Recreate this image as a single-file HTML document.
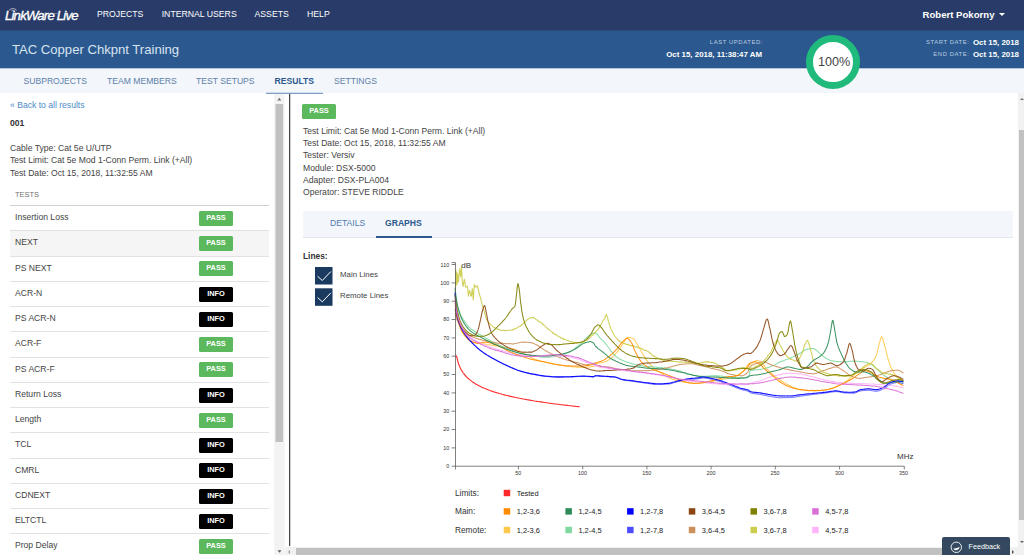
<!DOCTYPE html>
<html lang="en">
<head>
<meta charset="utf-8">
<title>LinkWare Live - TAC Copper Chkpnt Training</title>
<style>
*{box-sizing:border-box;margin:0;padding:0}
html,body{width:1024px;height:555px;overflow:hidden;background:#fff}
body{font-family:"Liberation Sans",Arial,sans-serif;font-size:8.6px;color:#444;position:relative}
.abs{position:absolute;white-space:nowrap}
/* top nav */
#nav{position:absolute;left:0;top:0;width:1024px;height:31px;background:#293c69}
#logo{left:5px;top:6.5px;font-size:13.2px;font-style:italic;color:#fff;letter-spacing:-0.82px;line-height:18px;font-weight:400;-webkit-text-stroke:0.35px #fff}
.navi{top:0;height:30px;line-height:29px;color:#fff;font-size:8.7px}
#user{top:0;height:30px;line-height:29px;color:#fff;font-weight:700;font-size:9.6px}
/* band */
#band{position:absolute;left:0;top:30px;width:1024px;height:39px;background:#2b598f}
#title{left:12px;top:11.3px;font-size:13.1px;color:#d9e3ef;line-height:18px}
.bl{color:#b9cbe0;font-size:5.9px;letter-spacing:0.58px}
.bv{color:#fff;font-size:7.9px;font-weight:700}
/* tabs */
#tabs{position:absolute;left:0;top:68px;width:1024px;height:25px;background:#f3f6fa}
.tab{top:0.5px;height:25px;line-height:25px;color:#5c80ab;font-size:8.6px}
.tab.act{color:#2b598f;font-weight:700}
/* left */
#left{position:absolute;left:0;top:93px;width:274px;height:462px;background:#fff;overflow:hidden}
.row{position:absolute;left:10px;width:259px;height:25.25px;border-top:1px solid #e2e2e2}
.row span{position:absolute;left:5px;top:0;line-height:23px;color:#444}
.row i{position:absolute;left:189px;top:4.8px;width:34px;height:15px;border-radius:1.5px;font-style:normal;font-weight:700;font-size:7.4px;line-height:13.6px;text-align:center;color:#fff}
.pass{background:#5cb85c}
.info{background:#000}
.sb{position:absolute;background:#f1f1f1}
.th{position:absolute;background:#c1c1c1}
</style>
</head>
<body>
<div id="nav">
  <div class="abs" id="logo">LinkWare<span style="font-size:2.4px;font-style:normal;letter-spacing:0;-webkit-text-stroke:0;position:relative;top:-6px;left:0.2px;margin-right:-1.2px;opacity:.8">TM</span><span style="margin-left:0.6px">Live</span></div>
  <svg class="abs" style="left:8px;top:5.6px" width="10" height="5" viewBox="0 0 10 5"><path d="M1.2 4.2A5 5 0 0 1 8.6 4.2M2.8 5.4A3 3 0 0 1 7 5.4" fill="none" stroke="#fff" stroke-width="0.7" stroke-opacity="0.85"/></svg>
  <div class="abs navi" style="left:97px">PROJECTS</div>
  <div class="abs navi" style="left:161.7px">INTERNAL USERS</div>
  <div class="abs navi" style="left:254.5px">ASSETS</div>
  <div class="abs navi" style="left:307px">HELP</div>
  <div class="abs" id="user" style="left:922.5px">Robert Pokorny</div>
  <div class="abs" style="left:999px;top:13px;width:0;height:0;border-left:3px solid transparent;border-right:3px solid transparent;border-top:3px solid #fff"></div>
</div>
<div id="band">
  <div class="abs" id="title">TAC Copper Chkpnt Training</div>
  <div class="abs bl" style="right:261px;top:9.4px">LAST UPDATED:</div>
  <div class="abs bv" style="right:262px;top:20px">Oct 15, 2018, 11:38:47 AM</div>
  <div class="abs bl" style="right:54.5px;top:9.2px">START DATE:</div>
  <div class="abs bv" style="right:5px;top:8px">Oct 15, 2018</div>
  <div class="abs bl" style="right:54.5px;top:21.2px">END DATE:</div>
  <div class="abs bv" style="right:5px;top:20px">Oct 15, 2018</div>
</div>
<div id="tabs">
  <div class="abs tab" style="left:23.5px">SUBPROJECTS</div>
  <div class="abs tab" style="left:107px">TEAM MEMBERS</div>
  <div class="abs tab" style="left:196px">TEST SETUPS</div>
  <div class="abs tab act" style="left:274.6px">RESULTS</div>
  <div class="abs tab" style="left:334px">SETTINGS</div>
</div>
<div class="abs" style="left:0;top:30px;width:1024px;height:1px;background:#2a4878"></div>
<div class="abs" style="left:0;top:68px;width:1024px;height:1px;background:#b7c7da"></div>
<!-- progress ring -->
<svg class="abs" style="left:803px;top:31.8px" width="60" height="60" viewBox="0 0 60 60">
  <circle cx="30" cy="30" r="23.5" fill="#fff" stroke="#21ba7d" stroke-width="7"/>
  <text x="31.2" y="34" text-anchor="middle" font-family="Liberation Sans, Arial, sans-serif" font-size="12.6" fill="#444">100%</text>
</svg>

<div id="left">
  <div class="abs" style="left:10px;top:6px;color:#4a8bc9;line-height:12px">« Back to all results</div>
  <div class="abs" style="left:10px;top:24px;color:#333;font-weight:700;line-height:12px">001</div>
  <div class="abs" style="left:10px;top:48.7px;line-height:12.44px;color:#444">Cable Type: Cat 5e U/UTP<br>Test Limit: Cat 5e Mod 1-Conn Perm. Link (+All)<br>Test Date: Oct 15, 2018, 11:32:55 AM</div>
  <div class="abs" style="left:15px;top:96.6px;font-size:7.45px;color:#707070;line-height:10px">TESTS</div>
  <div class="row" style="top:112px;border-top:1px solid #d0d0d0"><span>Insertion Loss</span><i class="pass">PASS</i></div>
  <div class="row" style="top:137.25px;background:#f5f5f5"><span>NEXT</span><i class="pass">PASS</i></div>
  <div class="row" style="top:162.5px"><span>PS NEXT</span><i class="pass">PASS</i></div>
  <div class="row" style="top:187.75px"><span>ACR-N</span><i class="info">INFO</i></div>
  <div class="row" style="top:213px"><span>PS ACR-N</span><i class="info">INFO</i></div>
  <div class="row" style="top:238.25px"><span>ACR-F</span><i class="pass">PASS</i></div>
  <div class="row" style="top:263.5px"><span>PS ACR-F</span><i class="pass">PASS</i></div>
  <div class="row" style="top:288.75px"><span>Return Loss</span><i class="info">INFO</i></div>
  <div class="row" style="top:314px"><span>Length</span><i class="pass">PASS</i></div>
  <div class="row" style="top:339.25px"><span>TCL</span><i class="info">INFO</i></div>
  <div class="row" style="top:364.5px"><span>CMRL</span><i class="info">INFO</i></div>
  <div class="row" style="top:389.75px"><span>CDNEXT</span><i class="info">INFO</i></div>
  <div class="row" style="top:415px"><span>ELTCTL</span><i class="info">INFO</i></div>
  <div class="row" style="top:440.25px"><span>Prop Delay</span><i class="pass">PASS</i></div>
</div>
<!-- left scrollbar -->
<svg class="abs" style="left:270px;top:93px" width="20" height="462" viewBox="270 93 20 462">
  <rect x="274.2" y="93" width="10.4" height="462" fill="#f3f3f3"/>
  <rect x="275.5" y="104" width="7.6" height="338" fill="#c1c1c1"/>
  <path d="M277.3 100.4L279.3 97.8L281.3 100.4Z" fill="#707070"/>
  <path d="M277.5 550.2L279.5 552.8L281.5 550.2Z" fill="#606060"/>
</svg>
<!-- divider -->
<div class="abs" style="left:289px;top:93px;width:1px;height:453px;background:#444"></div><div class="abs" style="left:290px;top:94px;width:1px;height:452px;background:#d0d0d0"></div>

<div class="abs" style="left:266px;top:92px;width:57px;height:1px;background:#d3deeb"></div><div class="abs" style="left:266px;top:93px;width:57px;height:1px;background:#7f9fc6"></div>
<!-- RIGHT -->
<div class="abs pass" style="left:302px;top:104px;width:34px;height:15px;border-radius:1.5px;color:#fff;font-weight:700;font-size:7.4px;line-height:13.6px;text-align:center">PASS</div>
<div class="abs" style="left:303px;top:124.5px;line-height:12.35px;color:#444">Test Limit: Cat 5e Mod 1-Conn Perm. Link (+All)<br>Test Date: Oct 15, 2018, 11:32:55 AM<br>Tester: Versiv<br>Module: DSX-5000<br>Adapter: DSX-PLA004<br>Operator: STEVE RIDDLE</div>
<div class="abs" style="left:302.5px;top:211px;width:710.5px;height:26.5px;background:#f3f6fa;border-bottom:1.5px solid #e3e8ee"></div>
<div class="abs" style="left:330px;top:211px;line-height:25px;color:#4f7cb0">DETAILS</div>
<div class="abs" style="left:385px;top:211px;line-height:25px;color:#2b598f;font-weight:700">GRAPHS</div>
<div class="abs" style="left:376px;top:235.5px;width:56px;height:2px;background:#2b598f"></div>

<div class="abs" style="left:303px;top:250px;line-height:12px;color:#333;font-weight:700;font-size:8.4px">Lines:</div>
<svg class="abs" style="left:315px;top:267px" width="18" height="39" viewBox="0 0 18 39">
  <rect x="0" y="0" width="17.5" height="17.5" fill="#1b3a5f"/>
  <polyline points="2.6,9.3 7.3,13.5 15.8,4.6" fill="none" stroke="#fff" stroke-width="1"/>
  <rect x="0" y="21.3" width="17.5" height="17.5" fill="#1b3a5f"/>
  <polyline points="2.6,30.6 7.3,34.8 15.8,25.9" fill="none" stroke="#fff" stroke-width="1"/>
</svg>
<div class="abs" style="left:340px;top:268.7px;line-height:12px;font-size:7.85px;color:#444">Main Lines</div>
<div class="abs" style="left:340px;top:290.4px;line-height:12px;font-size:7.85px;color:#444">Remote Lines</div>

<!-- CHART -->
<svg id="chart" class="abs" style="left:430px;top:255px" width="500" height="290" viewBox="430 255 500 290" font-family="Liberation Sans, Arial, sans-serif">
<polyline fill="none" stroke="#ff2a2a" stroke-width="1.15" points="455.5,356.0 455.8,356.0 456.1,356.0 456.4,356.0 456.8,356.9 457.1,358.3 457.4,359.6 457.7,360.8 458.0,361.9 458.3,362.9 458.6,363.9 458.9,364.7 459.3,365.5 459.6,366.3 459.9,367.0 460.2,367.7 460.5,368.3 460.8,369.0 461.1,369.5 461.5,370.1 461.8,370.6 462.1,371.2 462.4,371.7 462.7,372.1 463.0,372.6 463.3,373.0 463.7,373.5 464.0,373.9 464.3,374.3 464.6,374.7 464.9,375.0 465.2,375.4 465.5,375.8 465.9,376.1 466.2,376.5 466.5,376.8 466.8,377.1 468.0,378.3 469.3,379.4 470.6,380.4 471.8,381.4 473.1,382.3 474.3,383.1 475.6,383.9 476.8,384.6 478.1,385.3 479.3,385.9 480.6,386.6 481.8,387.2 483.1,387.7 484.4,388.3 485.6,388.8 486.9,389.3 488.1,389.8 489.4,390.3 490.6,390.7 491.9,391.1 493.1,391.6 494.4,392.0 495.6,392.4 496.9,392.8 498.2,393.1 499.4,393.5 500.7,393.8 501.9,394.2 503.2,394.5 504.4,394.9 505.7,395.2 506.9,395.5 508.2,395.8 509.4,396.1 510.7,396.4 512.0,396.7 513.2,396.9 514.5,397.2 515.7,397.5 517.0,397.7 518.2,398.0 519.5,398.3 520.7,398.5 522.0,398.7 523.2,399.0 524.5,399.2 525.8,399.4 527.0,399.7 528.3,399.9 529.5,400.1 530.8,400.3 532.0,400.5 533.3,400.7 534.5,401.0 535.8,401.2 537.0,401.4 538.3,401.5 539.6,401.7 540.8,401.9 542.1,402.1 543.3,402.3 544.6,402.5 545.8,402.7 547.1,402.8 548.3,403.0 549.6,403.2 550.8,403.4 552.1,403.5 553.4,403.7 554.6,403.9 555.9,404.0 557.1,404.2 558.4,404.3 559.6,404.5 560.9,404.7 562.1,404.8 563.4,405.0 564.6,405.1 565.9,405.3 567.2,405.4 568.4,405.5 569.7,405.7 570.9,405.8 572.2,406.0 573.4,406.1 574.7,406.2 575.9,406.4 577.2,406.5 578.4,406.6 579.7,406.8"/>
<polyline fill="none" stroke="#ffc84d" stroke-width="1.05" stroke-linejoin="round" stroke-opacity="0.92" points="455.1,305.5 455.8,310.2 456.6,314.3 457.1,316.7 457.3,317.9 458.1,321.2 458.8,324.1 459.6,326.8 460.1,328.2 460.3,328.7 461.1,330.2 461.8,331.7 462.6,332.9 463.3,334.0 464.1,335.0 464.8,335.9 465.2,336.3 465.6,336.7 466.3,337.4 467.1,338.2 467.8,338.9 468.6,339.6 469.3,340.3 470.1,340.8 470.8,341.0 471.6,341.5 472.3,341.9 472.8,342.0 473.1,342.2 473.8,342.3 474.6,342.6 475.3,342.5 476.1,342.7 476.8,343.0 477.6,343.0 478.3,343.1 479.1,343.1 479.8,343.1 480.3,343.3 480.6,343.4 481.3,343.4 482.1,343.6 482.8,343.7 483.6,343.8 484.3,344.0 485.1,344.1 485.8,344.2 486.6,344.3 487.3,344.5 488.1,344.7 488.8,344.8 489.6,344.8 490.3,345.0 491.1,345.1 491.8,345.3 492.6,345.3 493.3,345.6 494.1,345.6 494.8,345.6 495.5,345.8 495.6,345.9 496.3,346.0 497.1,346.1 497.8,346.2 498.6,346.4 499.3,346.5 500.1,346.6 500.8,346.8 501.6,346.7 502.3,347.0 503.1,347.2 503.8,347.2 504.6,347.3 505.3,347.5 506.1,347.6 506.8,347.8 507.6,347.8 508.3,347.9 509.1,348.1 509.8,348.2 510.6,348.5 511.3,348.6 512.1,348.6 512.8,348.8 513.6,349.2 514.3,349.3 515.1,349.4 515.7,349.6 515.8,349.7 516.6,350.0 517.3,350.3 518.1,350.5 518.8,350.8 519.6,351.1 520.3,351.6 521.1,351.8 521.8,352.3 522.6,352.8 523.3,353.1 524.1,353.6 524.8,354.0 525.6,354.6 526.3,354.9 527.1,355.4 527.8,355.9 528.6,356.3 529.3,356.6 530.1,356.9 530.8,357.5 531.6,357.8 532.3,358.0 533.1,358.4 533.3,358.5 533.8,358.7 534.6,358.9 535.3,359.2 536.1,359.4 536.8,359.7 537.6,359.9 538.3,360.2 539.1,360.5 539.8,360.5 540.6,360.7 541.3,361.1 542.1,361.5 542.8,361.5 543.6,361.6 544.3,362.0 545.1,362.1 545.8,362.3 546.6,362.5 547.3,362.7 548.1,362.8 548.8,363.1 549.6,363.2 550.3,363.3 551.0,363.5 551.1,363.5 551.8,363.7 552.6,363.8 553.3,363.9 554.1,364.3 554.8,364.3 555.6,364.4 556.3,364.6 557.1,364.7 557.8,364.8 558.6,365.0 559.3,365.1 560.1,365.1 560.8,365.4 561.6,365.4 562.3,365.5 563.1,365.6 563.8,365.7 564.6,366.0 565.3,365.9 566.1,366.0 566.1,365.9 566.8,366.1 567.6,366.3 568.3,366.3 569.1,366.3 569.8,366.5 570.6,366.6 571.3,366.7 572.1,366.9 572.8,366.8 573.6,366.8 574.3,366.9 575.1,367.0 575.8,367.1 576.6,367.1 577.3,367.2 578.1,367.1 578.8,367.3 579.6,367.2 580.3,367.2 581.1,367.4 581.3,367.4 581.8,367.3 582.6,367.3 583.3,367.2 584.1,367.5 584.8,367.3 585.6,367.1 586.3,367.1 587.1,367.2 587.8,367.0 588.6,367.1 589.3,366.9 590.1,367.0 590.8,366.9 591.6,366.5 592.3,366.6 593.1,366.3 593.8,366.4 593.9,366.3 594.6,365.1 595.0,364.3 595.3,364.4 596.1,364.0 596.8,363.5 597.6,363.4 598.3,363.2 599.1,363.1 599.8,362.9 600.6,363.0 601.3,362.7 602.1,362.6 602.8,362.5 603.6,362.3 604.3,362.1 605.1,361.8 605.8,361.6 606.6,361.1 607.3,360.8 608.1,360.3 608.8,359.8 609.6,359.3 610.3,358.7 611.1,358.1 611.8,357.4 612.6,356.7 613.3,356.0 614.1,355.3 614.8,354.5 615.2,354.3 615.6,353.8 616.3,353.0 617.1,352.2 617.8,351.2 618.6,350.1 619.3,348.9 620.1,348.0 620.8,346.9 621.6,345.7 622.3,344.8 622.8,344.2 623.1,343.6 623.8,342.5 624.6,341.2 625.3,339.9 626.1,338.6 626.8,338.0 627.6,337.4 627.8,337.3 628.3,337.5 629.1,337.4 629.8,337.6 630.6,337.7 631.3,337.9 632.1,338.2 632.8,338.3 632.9,338.5 633.6,338.8 634.3,339.6 635.1,340.7 635.8,342.0 636.6,343.3 637.3,344.5 637.9,345.5 638.1,345.6 638.8,346.9 639.6,348.3 640.3,349.6 641.1,351.1 641.8,352.4 642.6,353.8 642.9,354.2 643.3,354.9 644.1,356.2 644.8,357.2 645.6,358.8 646.3,359.6 647.1,360.7 647.8,361.8 648.0,361.9 648.6,362.5 649.3,363.5 650.1,364.3 650.8,365.0 651.6,365.7 652.3,366.5 653.1,367.1 653.8,367.8 654.3,368.2 654.6,368.4 655.3,368.9 656.1,369.6 656.8,370.2 657.6,370.9 658.3,371.4 659.1,371.9 659.8,372.4 660.6,372.9 661.3,373.3 662.1,373.9 662.8,374.5 663.1,374.5 663.6,374.7 664.3,375.2 665.1,375.6 665.8,376.0 666.6,376.5 667.3,376.9 668.1,377.4 668.8,377.7 669.6,378.1 670.3,378.5 671.1,378.7 671.8,379.1 672.6,379.3 673.2,379.5 673.3,379.6 674.1,379.8 674.8,380.0 675.6,380.3 676.3,380.4 677.1,380.8 677.8,380.9 678.6,381.1 679.3,381.2 680.1,381.4 680.8,381.6 681.6,381.7 682.3,381.8 683.1,382.0 683.3,382.0 683.8,382.2 684.6,382.3 685.3,382.4 686.1,382.5 686.8,382.5 687.6,382.7 688.3,382.8 689.1,382.9 689.8,383.1 690.6,382.9 691.3,383.1 692.1,383.1 692.8,383.3 693.6,383.2 694.3,383.3 695.1,383.3 695.8,383.4 695.9,383.3 696.6,383.3 697.3,383.3 698.1,383.3 698.8,383.2 699.6,383.0 700.3,383.2 701.1,383.1 701.8,383.0 702.6,382.8 703.3,382.8 704.1,382.6 704.8,382.6 705.6,382.4 706.3,382.4 707.1,382.3 707.8,382.1 708.6,382.1 708.6,382.1 709.3,382.0 710.1,381.9 710.8,381.6 711.6,381.6 712.3,381.5 713.1,381.4 713.8,381.0 714.6,380.9 715.3,380.9 716.1,380.5 716.8,380.4 717.6,380.3 718.3,380.2 719.1,379.9 719.8,379.9 720.6,379.7 721.2,379.7 721.3,379.5 722.1,379.4 722.8,379.2 723.6,379.1 724.3,379.0 725.1,378.9 725.8,378.8 726.6,378.5 727.3,378.5 728.1,378.4 728.8,378.2 729.6,378.0 730.3,377.9 731.1,377.6 731.8,377.6 732.6,377.4 733.3,377.1 733.8,377.1 734.1,376.8 734.8,376.6 735.6,376.3 736.3,376.1 737.1,375.5 737.8,375.2 738.6,374.8 739.3,374.3 740.1,373.8 740.8,373.1 741.6,372.4 742.3,372.1 743.1,371.3 743.8,370.7 743.9,370.6 744.6,370.0 745.3,368.9 746.1,367.5 746.8,366.4 747.6,365.1 748.3,364.2 749.1,363.7 749.4,363.6 749.8,364.3 750.0,364.4 750.6,364.3 751.3,364.0 752.1,363.4 752.8,362.8 753.6,362.1 754.3,361.6 755.1,360.9 755.8,360.8 756.3,360.6 756.6,360.6 757.3,360.6 758.1,360.8 758.8,360.9 759.6,360.9 760.1,361.0 760.3,361.2 761.1,361.6 761.8,362.6 762.6,363.6 763.3,364.6 764.1,365.6 764.8,366.6 765.1,366.9 765.6,367.5 766.3,368.4 767.1,369.1 767.8,369.7 768.6,370.5 769.3,371.2 770.1,371.9 770.8,372.7 771.5,373.2 771.6,373.5 772.3,374.0 773.1,374.8 773.8,375.4 774.6,375.9 775.3,376.6 776.1,377.1 776.8,377.6 777.6,378.2 777.8,378.3 778.3,378.7 779.1,379.2 779.8,379.7 780.6,380.3 781.3,380.7 782.1,381.2 782.8,381.6 783.6,382.2 784.3,382.7 785.1,383.1 785.8,383.6 786.6,384.0 787.3,384.3 787.9,384.6 788.1,384.7 788.8,385.2 789.6,385.5 790.3,386.0 791.1,386.2 791.8,386.6 792.6,387.0 793.3,387.3 794.1,387.5 794.8,387.8 795.6,388.2 796.3,388.6 797.1,388.8 797.8,389.0 798.6,389.2 799.3,389.5 800.1,389.4 800.5,389.7 800.8,389.7 801.6,389.7 802.3,390.1 803.1,389.9 803.8,390.1 804.6,390.2 805.3,390.4 806.1,390.4 806.8,390.6 807.6,390.6 808.3,390.7 809.1,390.6 809.8,390.7 810.6,391.0 811.3,390.8 812.1,390.8 812.8,390.9 813.1,391.0 813.6,390.9 814.3,390.9 815.1,390.8 815.8,390.9 816.6,390.8 817.3,390.6 818.1,390.8 818.8,390.7 819.6,390.4 820.3,390.4 821.1,390.4 821.8,390.1 822.6,389.9 823.3,389.9 824.1,389.8 824.8,389.7 825.6,389.7 825.7,389.7 826.3,389.4 827.1,389.4 827.8,389.4 828.6,389.2 829.3,389.0 830.1,388.7 830.8,388.6 831.6,388.2 832.3,388.1 833.1,387.8 833.8,387.6 834.6,387.3 835.3,386.9 836.1,386.7 836.8,386.5 837.6,386.1 838.3,385.8 838.3,385.8 839.1,385.4 839.8,385.2 840.6,384.9 841.3,384.4 842.1,383.9 842.8,383.4 843.6,383.0 844.3,382.4 845.1,382.0 845.8,381.5 846.6,380.9 847.3,380.3 848.1,379.8 848.4,379.5 848.8,379.4 849.6,378.7 850.3,377.9 851.1,377.4 851.8,376.9 852.6,376.1 853.3,375.5 854.1,374.8 854.8,374.0 855.6,373.4 856.0,373.1 856.3,373.0 857.1,372.5 857.8,372.0 858.6,371.4 859.3,371.0 860.1,370.4 860.8,369.9 861.6,369.5 862.3,368.9 863.1,368.3 863.6,368.1 863.8,368.0 864.6,367.3 865.3,367.1 866.1,366.6 866.8,366.1 867.6,365.7 868.3,365.3 869.1,364.8 869.8,364.3 870.6,363.7 871.1,363.0 871.3,362.9 872.1,362.2 872.8,361.4 873.6,360.3 874.3,359.1 875.1,357.9 875.8,356.3 876.2,355.5 876.6,354.4 877.3,351.7 878.1,348.8 878.8,345.4 879.2,344.2 879.6,342.7 880.3,339.9 881.1,337.5 881.7,336.6 881.8,336.7 882.6,338.1 883.3,340.7 884.1,343.8 884.3,344.3 884.8,346.3 885.6,349.2 886.3,352.3 887.1,355.3 887.5,356.8 887.8,358.1 888.6,360.5 889.3,362.9 890.1,365.1 890.8,367.2 891.3,368.0 891.6,368.7 892.3,370.2 893.1,371.4 893.8,372.6 894.6,373.7 895.3,374.7 896.1,375.5 896.4,375.8 896.8,376.3 897.6,376.9 898.3,377.7 899.1,378.2 899.8,378.8 900.6,379.3 901.3,379.8 902.1,380.3 902.8,380.7 903.4,380.8"/>
<polyline fill="none" stroke="#7fd8a0" stroke-width="1.05" stroke-linejoin="round" stroke-opacity="0.92" points="455.1,290.3 455.8,296.6 456.6,301.6 456.6,301.5 457.3,305.3 458.1,308.2 458.8,310.4 458.9,310.6 459.6,312.4 460.3,314.1 461.1,315.8 461.8,317.1 462.6,318.4 463.2,319.3 463.3,319.7 464.1,320.8 464.8,321.9 465.6,322.9 466.3,324.0 467.1,324.8 467.8,325.8 468.6,326.6 469.3,327.4 470.1,328.1 470.2,328.1 470.8,328.8 471.6,329.5 472.3,329.8 473.1,330.3 473.8,330.8 474.6,331.5 475.3,331.9 476.1,332.5 476.8,332.9 477.6,333.3 478.3,333.7 479.1,334.1 479.8,334.6 480.6,334.9 481.3,335.4 482.1,335.8 482.8,336.4 482.9,336.2 483.6,336.6 484.3,337.1 485.1,337.7 485.8,338.0 486.6,338.6 487.3,338.8 488.1,339.4 488.8,339.9 489.6,340.1 490.3,340.6 491.1,341.1 491.8,341.5 492.6,341.9 493.3,342.4 494.1,342.7 494.8,343.0 495.5,343.3 495.6,343.4 496.3,343.7 497.1,344.1 497.8,344.5 498.6,344.9 499.3,345.1 500.1,345.4 500.8,345.7 501.6,346.3 502.3,346.5 503.1,346.9 503.8,347.1 504.6,347.4 505.3,347.8 506.1,348.1 506.8,348.3 507.6,348.6 508.1,349.0 508.3,349.0 509.1,349.3 509.8,349.6 510.6,349.8 511.3,350.2 512.1,350.5 512.8,350.7 513.6,351.1 514.3,351.3 515.1,351.6 515.8,352.0 516.6,352.1 517.3,352.5 518.1,352.6 518.8,352.9 519.6,353.1 520.3,353.3 520.7,353.4 521.1,353.5 521.8,353.7 522.6,353.8 523.3,354.0 524.1,354.1 524.8,354.4 525.6,354.6 526.3,354.8 527.1,354.9 527.8,355.2 528.6,355.2 529.3,355.3 530.1,355.6 530.8,355.5 531.6,355.8 532.3,355.7 533.1,355.9 533.3,355.8 533.8,356.1 534.6,356.1 535.3,356.1 536.1,356.5 536.8,356.5 537.6,356.5 538.3,356.6 539.1,356.7 539.8,356.8 540.6,356.9 541.3,357.0 542.1,357.0 542.8,357.1 543.6,357.1 544.3,357.1 545.1,357.2 545.8,357.2 545.9,357.3 546.6,357.3 547.3,357.1 548.1,357.2 548.8,357.1 549.6,357.2 550.3,357.0 551.1,357.0 551.8,356.8 552.6,356.7 553.3,356.7 554.1,356.6 554.8,356.5 555.6,356.3 556.3,356.3 557.1,356.1 557.8,356.2 558.6,355.9 558.6,356.0 559.3,355.7 560.1,355.7 560.8,355.4 561.6,355.2 562.3,355.0 563.1,354.7 563.8,354.4 564.6,354.2 565.3,353.8 566.1,353.5 566.8,353.0 567.6,352.7 568.3,352.4 569.1,351.8 569.8,351.7 570.6,351.2 571.2,350.9 571.3,350.9 572.1,350.4 572.8,350.0 573.6,349.4 574.3,349.0 575.1,348.4 575.8,347.8 576.6,347.3 577.3,346.7 578.1,345.9 578.8,345.4 579.6,344.7 580.3,344.2 581.1,343.5 581.3,343.2 581.8,342.7 582.6,342.1 583.3,341.3 584.1,340.6 584.8,339.7 585.6,338.8 586.3,338.0 587.1,337.1 587.8,336.6 588.6,336.0 588.8,335.7 589.3,335.4 590.1,335.0 590.8,334.6 591.6,334.0 592.3,333.6 593.1,333.4 593.4,333.1 593.8,333.1 594.6,332.8 595.0,332.9 595.3,332.8 596.1,333.4 596.8,334.0 597.6,334.7 598.3,335.7 599.1,336.8 599.8,337.8 600.0,337.9 600.6,338.4 601.3,339.1 602.1,339.9 602.8,340.6 603.6,341.4 604.3,342.1 605.1,343.0 605.8,343.9 606.6,344.7 607.3,346.0 608.1,347.0 608.8,348.0 609.6,349.0 610.3,350.2 611.1,351.2 611.8,352.1 612.6,352.8 612.7,353.1 613.3,353.7 614.1,354.4 614.8,355.4 615.6,356.1 616.3,356.7 617.1,357.2 617.8,357.9 618.6,358.2 619.3,358.8 620.1,359.2 620.2,359.3 620.8,359.5 621.6,360.1 622.3,360.4 623.1,360.7 623.8,361.1 624.6,361.2 625.3,361.5 626.1,361.7 626.8,362.0 627.6,362.4 628.3,362.5 629.1,362.8 629.8,362.9 630.3,363.1 630.6,363.2 631.3,363.3 632.1,363.8 632.8,364.0 633.6,364.0 634.3,364.3 635.1,364.5 635.8,364.6 636.6,364.9 637.3,365.0 638.1,365.2 638.8,365.3 639.6,365.5 640.3,365.6 640.4,365.5 641.1,365.7 641.8,365.8 642.6,365.9 643.3,366.0 644.1,366.2 644.8,366.2 645.6,366.2 646.3,366.4 647.1,366.3 647.8,366.6 648.6,366.6 649.3,366.5 650.1,366.7 650.8,366.8 651.6,366.6 652.3,366.8 653.0,366.9 653.1,366.8 653.8,366.9 654.6,367.0 655.3,367.2 656.1,367.2 656.8,367.5 657.6,367.3 658.3,367.5 659.1,367.5 659.8,367.6 660.6,367.5 661.3,367.5 662.1,367.7 662.8,367.9 663.6,368.0 664.3,368.1 665.1,368.1 665.7,368.1 665.8,368.3 666.6,368.4 667.3,368.4 668.1,368.5 668.8,368.6 669.6,368.9 670.3,369.0 671.1,369.1 671.8,369.3 672.6,369.4 673.3,369.5 674.1,369.6 674.8,369.8 675.6,369.9 676.3,370.3 677.1,370.6 677.8,370.5 678.3,370.7 678.6,370.8 679.3,370.9 680.1,371.2 680.8,371.3 681.6,371.8 682.3,371.9 683.1,372.2 683.8,372.5 684.6,372.6 685.3,372.8 686.1,373.1 686.8,373.5 687.6,373.7 688.3,373.9 689.1,374.0 689.8,374.3 690.6,374.5 690.9,374.5 691.3,374.7 692.1,374.7 692.8,374.8 693.6,374.9 694.3,375.3 695.1,375.3 695.8,375.5 696.6,375.6 697.3,375.8 698.1,375.9 698.8,375.9 699.6,376.0 700.3,376.2 701.1,376.1 701.8,376.3 702.6,376.3 703.3,376.3 703.5,376.2 704.1,376.3 704.8,376.2 705.6,376.2 706.3,376.2 707.1,376.2 707.8,376.1 708.6,376.1 709.3,376.1 710.1,375.9 710.8,376.0 711.6,375.8 712.3,375.7 713.1,375.8 713.8,375.8 714.6,375.8 715.3,375.6 716.1,375.8 716.1,375.8 716.8,375.9 717.6,375.8 718.3,375.9 719.1,375.8 719.8,375.9 720.6,376.0 721.3,376.2 722.1,376.1 722.8,376.3 723.6,376.5 724.3,376.7 725.1,376.7 725.8,376.7 726.6,376.8 727.3,377.0 728.1,377.0 728.8,377.1 728.8,377.1 729.6,377.0 730.3,377.1 731.1,377.1 731.8,377.2 732.6,377.4 733.3,377.4 734.1,377.4 734.8,377.6 735.6,377.6 736.3,377.5 737.1,377.7 737.8,377.7 738.6,377.7 739.3,377.6 740.1,377.8 740.8,377.8 741.4,377.6 741.6,377.8 742.3,377.8 743.1,377.7 743.8,377.7 744.6,377.6 745.3,377.4 746.1,377.3 746.8,377.2 747.6,376.7 748.3,376.6 748.9,376.3 749.1,375.8 749.8,371.0 750.0,370.6 750.6,370.5 751.3,370.3 752.1,370.2 752.8,370.0 753.6,370.2 754.3,369.9 755.1,369.9 755.8,369.8 756.6,369.8 757.3,369.8 758.1,369.7 758.8,369.7 759.6,369.6 760.1,369.4 760.3,369.5 761.1,369.2 761.8,369.3 762.6,369.0 763.3,368.7 764.1,368.5 764.8,368.4 765.6,368.2 766.3,368.0 767.1,367.8 767.8,367.6 768.6,367.4 769.3,367.3 770.1,366.8 770.2,366.9 770.8,366.6 771.6,366.3 772.3,365.9 773.1,365.6 773.8,365.3 774.6,364.9 775.3,364.4 776.1,364.1 776.8,363.6 777.6,363.2 778.3,362.8 779.1,362.4 779.8,362.1 780.3,361.9 780.6,361.7 781.3,361.3 782.1,361.3 782.8,360.9 783.6,360.8 784.3,360.3 785.1,360.1 785.8,359.8 786.6,359.6 787.3,359.3 788.1,358.9 788.8,358.7 789.6,358.4 790.3,358.1 790.4,358.1 791.1,357.9 791.8,357.5 792.6,357.1 793.3,356.7 794.1,356.3 794.8,356.0 795.6,355.6 796.3,355.3 797.1,354.8 797.8,354.4 798.6,354.1 799.3,353.6 800.1,353.2 800.5,353.0 800.8,352.9 801.6,352.2 802.3,351.7 803.1,351.3 803.8,350.7 804.6,350.2 805.3,349.8 806.1,349.6 806.8,349.2 806.8,349.3 807.6,349.2 808.3,348.9 809.1,348.9 809.8,348.7 810.6,348.6 811.3,348.5 812.1,348.6 812.8,348.5 813.1,348.5 813.6,348.5 814.3,349.0 815.1,349.3 815.8,349.8 816.6,350.4 817.3,351.1 818.1,351.9 818.8,352.6 819.4,352.9 819.6,353.3 820.3,353.9 821.1,354.4 821.8,355.1 822.6,355.7 823.3,356.4 824.1,357.0 824.8,357.4 825.6,358.1 825.7,358.1 826.3,358.5 827.1,358.9 827.8,359.2 828.6,359.6 829.3,360.0 830.1,360.3 830.8,360.5 831.6,360.7 832.3,361.0 833.1,361.0 833.3,361.1 833.8,361.0 834.6,361.3 835.3,361.3 836.1,361.4 836.8,361.5 837.6,361.6 838.3,361.8 839.1,361.7 839.8,361.7 840.6,361.8 841.3,361.8 842.1,361.9 842.8,361.8 843.4,361.8 843.6,361.8 844.3,361.8 845.1,361.7 845.8,361.7 846.6,361.7 847.3,361.7 848.1,361.5 848.8,361.4 849.6,361.4 850.3,361.3 851.1,361.3 851.8,361.2 852.6,361.1 853.3,361.2 853.5,361.2 854.1,361.1 854.8,361.1 855.6,361.0 856.3,361.2 857.1,361.2 857.8,361.3 858.6,361.3 859.3,361.4 860.1,361.5 860.8,361.6 861.6,361.7 862.3,361.7 863.1,361.7 863.6,362.0 863.8,362.0 864.6,362.0 865.3,362.3 866.1,362.3 866.8,362.5 867.6,362.9 868.3,363.3 869.1,363.4 869.8,363.7 870.6,364.3 871.1,364.3 871.3,364.6 872.1,365.0 872.8,365.4 873.6,366.1 874.3,366.9 875.1,367.3 875.8,368.1 876.6,368.8 877.3,369.5 878.1,370.1 878.7,370.8 878.8,370.8 879.6,371.3 880.3,372.1 881.1,372.8 881.8,373.5 882.6,374.0 883.3,374.8 884.1,375.4 884.8,376.0 885.6,376.6 886.3,376.9 886.3,377.2 887.1,377.5 887.8,378.1 888.6,378.7 889.3,378.9 890.1,379.2 890.8,379.8 891.6,380.1 892.3,380.5 893.1,380.8 893.8,381.3 894.6,381.5 895.3,381.7 896.1,382.0 896.4,382.0 896.8,382.2 897.6,382.3 898.3,382.5 899.1,382.8 899.8,382.8 900.6,383.1 901.3,383.2 902.1,383.2 902.8,383.2 903.4,383.3"/>
<polyline fill="none" stroke="#4d4dff" stroke-width="1.0" stroke-linejoin="round" stroke-opacity="0.92" points="455.1,293.2 455.8,304.0 456.1,307.0 456.6,311.5 457.3,316.9 457.6,318.3 458.1,320.2 458.8,322.7 459.6,324.6 460.1,326.0 460.3,326.4 461.1,328.0 461.8,329.5 462.6,330.8 462.7,330.9 463.3,332.0 464.1,333.2 464.8,334.3 465.6,335.4 466.3,336.4 467.1,337.4 467.8,338.4 468.6,339.2 469.3,340.0 470.1,340.9 470.2,341.1 470.8,341.8 471.6,342.5 472.3,343.3 473.1,344.1 473.8,344.8 474.6,345.5 475.3,346.3 476.1,346.9 476.8,347.6 477.6,348.3 478.3,348.8 479.1,349.6 479.8,350.1 480.6,350.6 481.3,351.3 482.1,351.9 482.8,352.4 482.9,352.4 483.6,352.9 484.3,353.5 485.1,354.0 485.8,354.5 486.6,354.9 487.3,355.4 488.1,355.8 488.8,356.2 489.6,356.7 490.3,357.2 491.1,357.6 491.8,358.0 492.6,358.4 493.3,358.7 494.1,359.3 494.8,359.7 495.5,359.9 495.6,360.1 496.3,360.4 497.1,360.9 497.8,361.2 498.6,361.6 499.3,362.1 500.1,362.5 500.8,362.7 501.6,363.2 502.3,363.6 503.1,363.9 503.8,364.4 504.6,364.6 505.3,365.0 506.1,365.3 506.8,365.8 507.6,366.1 508.1,366.3 508.3,366.3 509.1,366.8 509.8,367.1 510.6,367.4 511.3,367.8 512.1,368.1 512.8,368.4 513.6,368.7 514.3,369.0 515.1,369.4 515.8,369.6 516.6,369.9 517.3,370.2 518.1,370.5 518.8,370.8 519.6,370.9 520.3,371.2 520.7,371.3 521.1,371.5 521.8,371.7 522.6,371.9 523.3,372.1 524.1,372.3 524.8,372.5 525.6,372.7 526.3,372.8 527.1,373.0 527.8,373.2 528.6,373.4 529.3,373.6 530.1,373.8 530.8,373.9 531.6,374.1 532.3,374.1 533.1,374.3 533.3,374.3 533.8,374.5 534.6,374.5 535.3,374.8 536.1,374.9 536.8,375.0 537.6,375.1 538.3,375.3 539.1,375.4 539.8,375.6 540.6,375.8 541.3,375.8 542.1,376.0 542.8,376.0 543.6,376.2 544.3,376.3 545.1,376.4 545.8,376.3 545.9,376.4 546.6,376.4 547.3,376.6 548.1,376.6 548.8,376.6 549.6,376.7 550.3,376.8 551.1,376.8 551.8,376.8 552.6,376.9 553.3,377.1 554.1,377.0 554.8,377.0 555.6,377.0 556.3,377.1 557.1,377.1 557.8,377.2 558.6,377.1 558.6,377.2 559.3,377.1 560.1,377.1 560.8,377.1 561.6,377.1 562.3,377.1 563.1,377.1 563.8,377.1 564.6,377.0 565.3,377.0 566.1,377.1 566.8,377.0 567.6,377.0 568.3,377.0 569.1,377.0 569.8,377.0 570.6,376.8 571.2,376.9 571.3,376.9 572.1,376.9 572.8,376.9 573.6,376.8 574.3,376.8 575.1,376.7 575.8,376.7 576.6,376.6 577.3,376.6 578.1,376.6 578.8,376.5 579.6,376.6 580.3,376.5 581.1,376.5 581.8,376.4 582.6,376.4 583.3,376.4 583.8,376.4 584.1,376.4 584.8,376.4 585.6,376.4 586.3,376.5 587.1,376.5 587.8,376.6 588.6,376.6 589.3,376.6 590.1,376.7 590.8,376.7 591.6,376.8 592.3,376.9 593.1,376.9 593.8,376.9 593.9,377.0 594.6,376.3 595.0,376.0 595.3,376.0 596.1,376.0 596.8,376.1 597.6,376.0 598.3,376.1 599.1,376.1 599.8,376.2 600.6,376.2 601.3,376.2 602.1,376.4 602.8,376.4 603.6,376.4 604.3,376.5 605.1,376.5 605.8,376.6 606.6,376.6 607.3,376.7 608.1,376.6 608.8,376.8 609.6,376.8 610.3,376.9 611.1,377.0 611.8,376.9 612.6,377.1 613.3,377.1 614.1,377.2 614.8,377.3 615.2,377.4 615.6,377.4 616.3,377.6 617.1,377.8 617.8,378.1 618.6,378.4 619.3,378.8 620.1,379.1 620.8,379.3 621.6,379.6 622.3,379.8 622.8,379.9 623.1,380.1 623.8,380.1 624.6,380.2 625.3,380.3 626.1,380.5 626.8,380.7 627.6,380.6 628.3,380.7 629.1,380.8 629.8,380.9 630.6,381.1 631.3,381.1 632.1,381.2 632.8,381.3 632.9,381.3 633.6,381.3 634.3,381.6 635.1,381.6 635.8,381.7 636.6,381.8 637.3,381.9 638.1,382.1 638.8,382.2 639.6,382.3 640.3,382.5 641.1,382.5 641.8,382.6 642.6,382.8 643.3,382.9 644.1,382.9 644.8,383.1 645.5,383.2 645.6,383.1 646.3,383.2 647.1,383.4 647.8,383.5 648.6,383.5 649.3,383.7 650.1,383.8 650.8,383.9 651.6,383.9 652.3,384.1 653.1,384.2 653.8,384.2 654.6,384.4 655.3,384.4 656.1,384.4 656.8,384.5 657.6,384.4 658.1,384.4 658.3,384.5 659.1,384.4 659.8,384.5 660.6,384.4 661.3,384.5 662.1,384.4 662.8,384.3 663.6,384.3 664.3,384.3 665.1,384.2 665.8,384.1 666.6,384.2 667.3,384.1 668.1,384.0 668.2,384.0 668.8,384.0 669.6,383.8 670.3,383.8 671.1,383.6 671.8,383.4 672.6,383.1 673.3,382.9 674.1,382.7 674.8,382.5 675.6,382.3 676.3,382.1 677.1,381.8 677.8,381.7 678.3,381.6 678.6,381.5 679.3,381.3 680.1,381.1 680.8,381.0 681.6,380.8 682.3,380.7 683.1,380.6 683.8,380.4 684.6,380.4 685.3,380.1 686.1,379.9 686.8,379.9 687.6,379.7 688.3,379.6 688.4,379.7 689.1,379.5 689.8,379.3 690.6,379.4 691.3,379.3 692.1,379.3 692.8,379.2 693.6,379.1 694.3,379.1 695.1,379.0 695.8,379.0 696.6,378.9 697.3,378.8 698.1,378.7 698.5,378.7 698.8,378.7 699.6,378.5 700.3,378.4 701.1,378.3 701.8,378.2 702.6,378.0 703.3,377.9 703.5,378.0 704.1,378.0 704.8,378.0 705.6,378.1 706.3,378.3 707.1,378.4 707.8,378.5 708.6,378.6 709.3,378.8 710.1,379.1 710.8,379.2 711.1,379.2 711.6,379.3 712.3,379.6 713.1,379.7 713.8,379.8 714.6,380.1 715.3,380.2 716.1,380.5 716.8,380.6 717.6,380.9 718.3,381.0 719.1,381.2 719.8,381.4 720.6,381.7 721.2,381.9 721.3,381.9 722.1,382.2 722.8,382.4 723.6,382.7 724.3,383.0 725.1,383.2 725.8,383.5 726.6,383.9 727.3,384.2 728.1,384.5 728.8,384.8 729.6,385.0 730.3,385.3 731.1,385.6 731.3,385.8 731.8,385.9 732.6,386.2 733.3,386.5 734.1,386.8 734.8,387.2 735.6,387.5 736.3,387.7 737.1,388.1 737.8,388.4 738.6,388.6 739.3,388.9 740.1,389.2 740.8,389.4 741.4,389.6 741.6,389.6 742.3,389.9 743.1,390.0 743.8,390.3 744.6,390.2 745.3,390.5 746.1,390.7 746.8,390.8 747.6,391.1 748.3,391.4 748.9,391.7 749.1,391.7 749.8,392.6 750.0,392.7 750.6,392.9 751.3,393.1 752.1,393.3 752.8,393.4 753.6,393.6 754.3,393.6 755.1,393.7 755.8,393.9 756.6,393.9 757.3,394.0 758.1,394.1 758.8,394.3 759.6,394.3 760.1,394.5 760.3,394.4 761.1,394.6 761.8,394.7 762.6,394.9 763.3,395.1 764.1,395.2 764.8,395.4 765.6,395.5 766.3,395.7 767.1,395.8 767.8,396.0 768.6,396.2 769.3,396.2 770.1,396.4 770.2,396.4 770.8,396.5 771.6,396.7 772.3,396.8 773.1,396.9 773.8,397.0 774.6,397.2 775.3,397.2 776.1,397.4 776.8,397.5 777.6,397.5 778.3,397.6 779.1,397.7 779.8,397.8 780.3,397.8 780.6,397.7 781.3,397.7 782.1,397.6 782.8,397.7 783.6,397.7 784.3,397.6 785.1,397.7 785.8,397.6 786.6,397.6 787.3,397.6 788.1,397.6 788.8,397.6 789.6,397.6 790.3,397.5 790.4,397.5 791.1,397.6 791.8,397.5 792.6,397.4 793.3,397.3 794.1,397.2 794.8,397.1 795.6,397.0 796.3,396.8 797.1,396.7 797.8,396.6 798.6,396.4 799.3,396.3 800.1,396.2 800.5,396.1 800.8,396.0 801.6,396.0 802.3,395.9 803.1,395.8 803.8,395.7 804.6,395.6 805.3,395.5 806.1,395.4 806.8,395.3 807.6,395.2 808.3,395.1 809.1,395.0 809.8,394.9 810.6,394.8 811.3,394.7 812.1,394.7 812.8,394.5 813.1,394.5 813.6,394.4 814.3,394.4 815.1,394.2 815.8,394.1 816.6,394.1 817.3,394.0 818.1,393.9 818.8,393.8 819.6,393.7 820.3,393.6 821.1,393.6 821.8,393.5 822.6,393.4 823.3,393.3 824.1,393.1 824.8,393.1 825.6,393.0 825.7,393.0 826.3,392.9 827.1,392.7 827.8,392.7 828.6,392.6 829.3,392.4 830.1,392.3 830.8,392.1 831.6,392.1 832.3,391.9 833.1,391.9 833.8,391.7 834.6,391.7 835.3,391.7 835.8,391.6 836.1,391.6 836.8,391.7 837.6,391.7 838.3,391.8 839.1,391.9 839.8,392.0 840.6,392.3 841.3,392.4 842.1,392.5 842.8,392.7 843.6,392.7 844.3,392.9 845.1,393.0 845.8,393.0 845.9,392.9 846.6,392.9 847.3,393.0 848.1,393.1 848.8,393.1 849.6,393.1 850.3,393.1 851.1,393.1 851.8,393.2 852.6,393.2 853.3,393.2 853.5,393.2 854.1,393.1 854.8,393.0 855.6,392.7 856.3,392.5 857.1,392.3 857.8,391.8 858.6,391.4 859.3,391.2 860.1,391.0 860.8,390.9 861.0,390.9 861.6,390.7 862.3,390.7 863.1,390.7 863.8,390.5 864.6,390.5 865.3,390.4 866.1,390.4 866.8,390.3 867.6,390.3 868.3,390.3 868.6,390.2 869.1,390.3 869.8,390.3 870.6,390.5 871.3,390.6 872.1,390.7 872.8,390.8 873.6,390.9 874.3,391.1 875.1,391.2 875.8,391.2 876.2,391.3 876.6,391.2 877.3,391.1 878.1,390.9 878.8,390.8 879.6,390.6 880.3,390.2 881.1,390.0 881.8,389.7 882.6,389.3 883.3,389.0 883.8,388.9 884.1,388.7 884.8,388.2 885.6,387.7 886.3,387.2 887.1,386.6 887.8,385.9 888.6,385.4 889.3,384.8 890.1,384.4 890.8,384.0 891.3,383.9 891.6,383.7 892.3,383.5 893.1,383.3 893.8,383.1 894.6,382.9 895.3,382.8 896.1,382.6 896.8,382.5 897.6,382.6 897.6,382.5 898.3,382.6 899.1,382.6 899.8,382.7 900.6,382.8 901.3,383.0 902.1,383.3 902.8,383.5 903.4,383.7"/>
<polyline fill="none" stroke="#cd8f5a" stroke-width="1.05" stroke-linejoin="round" stroke-opacity="0.92" points="455.1,313.0 455.8,315.8 456.6,318.5 457.3,320.5 457.6,321.0 458.1,322.1 458.8,323.4 459.6,324.7 460.3,325.7 461.1,326.8 461.8,327.7 462.6,328.7 462.7,328.7 463.3,329.5 464.1,330.2 464.8,331.3 465.6,331.8 466.3,332.8 467.1,333.4 467.8,334.0 468.6,334.6 469.3,335.2 470.1,335.7 470.2,335.7 470.8,336.2 471.6,336.3 472.3,336.8 473.1,337.1 473.8,337.5 474.6,337.6 475.3,338.0 476.1,338.3 476.8,338.4 477.6,338.8 477.8,338.8 478.3,339.0 479.1,339.2 479.8,339.3 480.6,339.5 481.3,339.8 482.1,340.1 482.8,340.3 483.6,340.3 484.3,340.5 485.1,340.7 485.8,340.8 486.6,341.0 487.3,341.2 487.9,341.5 488.1,341.3 488.8,341.5 489.6,341.7 490.3,341.7 491.1,341.9 491.8,342.1 492.6,342.3 493.3,342.3 494.1,342.6 494.8,342.6 495.6,342.8 496.3,342.9 497.1,343.0 497.8,343.2 498.6,343.2 499.3,343.2 500.1,343.3 500.5,343.3 500.8,343.4 501.6,343.3 502.3,343.3 503.1,343.6 503.8,343.5 504.6,343.5 505.3,343.7 506.1,343.6 506.8,343.8 507.6,343.7 508.3,343.7 509.1,343.6 509.8,343.6 510.6,343.7 511.3,343.8 512.1,343.9 512.8,344.0 513.1,343.8 513.6,343.9 514.3,343.7 515.1,343.6 515.8,343.4 516.6,343.2 517.3,343.1 518.1,342.9 518.8,342.8 519.6,342.5 520.3,342.5 521.1,342.3 521.8,342.2 522.6,342.2 523.2,342.1 523.3,342.1 524.1,342.1 524.8,342.1 525.6,342.2 526.3,342.2 527.1,342.2 527.8,342.3 528.6,342.3 529.3,342.5 530.1,342.4 530.8,342.7 530.8,342.6 531.6,342.7 532.3,342.9 533.1,343.2 533.8,343.5 534.6,343.9 535.3,344.2 536.1,344.5 536.8,345.1 537.6,345.3 538.3,346.0 538.4,345.8 539.1,346.3 539.8,346.9 540.6,347.4 541.3,347.7 542.1,348.3 542.8,348.9 543.6,349.5 544.3,349.9 545.1,350.4 545.8,350.9 545.9,350.9 546.6,351.3 547.3,351.7 548.1,352.0 548.8,352.4 549.6,352.7 550.3,353.3 551.1,353.8 551.8,353.9 552.6,354.5 553.3,354.8 554.1,355.1 554.8,355.4 555.6,355.8 556.0,355.9 556.3,356.1 557.1,356.4 557.8,356.8 558.6,357.1 559.3,357.3 560.1,357.7 560.8,357.8 561.6,358.2 562.3,358.5 563.1,358.7 563.8,359.0 564.6,359.3 565.3,359.4 566.1,359.7 566.1,359.7 566.8,360.0 567.6,360.1 568.3,360.5 569.1,360.6 569.8,360.5 570.6,360.9 571.3,361.2 572.1,361.3 572.8,361.4 573.6,361.6 574.3,361.9 575.1,362.1 575.8,362.2 576.2,362.3 576.6,362.5 577.3,362.6 578.1,362.7 578.8,363.1 579.6,363.3 580.3,363.5 581.1,363.8 581.8,364.0 582.6,364.0 583.3,364.5 584.1,364.6 584.8,364.7 585.6,364.7 586.3,364.8 586.3,364.7 587.1,364.8 587.8,364.6 588.6,364.5 589.3,364.3 590.1,364.1 590.8,364.0 591.6,363.8 592.3,363.5 593.1,363.3 593.8,363.2 594.6,363.2 595.0,363.3 595.3,363.4 596.1,365.7 596.4,365.9 596.8,366.1 597.6,366.3 598.3,366.2 599.1,366.3 599.8,366.5 600.6,366.6 601.3,366.5 602.1,366.7 602.8,366.6 603.6,366.8 604.3,366.7 605.1,366.7 605.8,366.8 606.6,366.8 607.3,367.0 607.6,367.1 608.1,367.0 608.8,367.1 609.6,367.1 610.3,367.3 611.1,367.5 611.8,367.7 612.6,367.8 613.3,368.0 614.1,368.2 614.8,368.3 615.6,368.5 616.3,368.8 617.1,368.9 617.8,369.0 618.6,369.3 619.3,369.3 620.1,369.4 620.2,369.3 620.8,369.6 621.6,369.6 622.3,369.8 623.1,369.9 623.8,370.0 624.6,370.1 625.3,370.2 626.1,370.2 626.8,370.3 627.6,370.4 628.3,370.5 629.1,370.6 629.8,370.7 630.6,370.6 631.3,370.8 632.1,370.7 632.8,370.8 632.9,370.7 633.6,370.8 634.3,370.8 635.1,370.7 635.8,370.8 636.6,370.7 637.3,370.7 638.1,370.7 638.8,370.6 639.6,370.9 640.3,370.7 641.1,370.8 641.8,370.6 642.6,370.6 643.3,370.7 644.1,370.7 644.8,370.8 645.5,370.6 645.6,370.8 646.3,370.8 647.1,370.6 647.8,370.7 648.6,370.5 649.3,370.6 650.1,370.5 650.8,370.5 651.6,370.3 652.3,370.2 653.1,370.2 653.8,369.9 654.6,369.9 655.3,369.8 656.1,369.7 656.8,369.7 657.6,369.6 658.1,369.6 658.3,369.5 659.1,369.4 659.8,369.2 660.6,369.0 661.3,368.9 662.1,368.6 662.8,368.8 663.6,368.4 664.3,368.3 665.1,368.1 665.8,368.1 666.6,367.9 667.3,367.7 668.1,367.5 668.8,367.3 669.6,367.1 670.3,367.0 670.7,366.9 671.1,366.7 671.8,366.7 672.6,366.3 673.3,366.3 674.1,365.9 674.8,365.7 675.6,365.5 676.3,365.4 677.1,365.1 677.8,364.9 678.6,364.9 679.3,364.6 680.1,364.5 680.8,364.5 680.8,364.4 681.6,364.3 682.3,364.2 683.1,364.2 683.8,364.1 684.6,363.9 685.3,364.0 686.1,363.9 686.8,363.8 687.6,363.7 688.3,363.7 689.1,363.7 689.8,363.7 690.6,363.7 690.9,363.5 691.3,363.6 692.1,363.8 692.8,363.8 693.6,363.9 694.3,364.1 695.1,364.2 695.8,364.4 696.6,364.5 697.3,364.9 698.1,365.0 698.8,365.1 699.6,365.4 700.3,365.4 701.0,365.7 701.1,365.7 701.8,365.8 702.6,366.0 703.3,366.1 704.1,366.5 704.8,366.6 705.6,366.8 706.3,367.0 707.1,367.1 707.8,367.3 708.6,367.5 709.3,367.6 710.1,368.1 710.8,368.1 711.1,368.2 711.6,368.4 712.3,368.3 713.1,368.7 713.8,368.8 714.6,368.9 715.3,369.2 716.1,369.2 716.8,369.6 717.6,369.8 718.3,369.8 719.1,370.0 719.8,370.3 720.6,370.5 721.2,370.7 721.3,370.8 722.1,371.0 722.8,371.2 723.6,371.6 724.3,371.8 725.1,372.1 725.8,372.4 726.6,373.0 727.3,373.2 728.1,373.7 728.8,373.7 729.6,374.0 730.3,374.3 731.1,374.4 731.3,374.5 731.8,374.6 732.6,374.7 733.3,374.7 734.1,374.9 734.8,375.3 735.6,375.3 736.3,375.5 737.1,375.4 737.8,375.5 738.6,375.6 739.3,375.7 740.1,375.7 740.8,375.8 741.4,375.9 741.6,375.7 742.3,375.7 743.1,375.4 743.8,375.3 744.6,374.8 745.3,374.4 746.1,373.8 746.8,373.3 747.6,372.5 747.7,372.4 748.3,371.1 749.1,368.9 749.8,367.0 750.0,366.9 750.6,366.4 751.3,365.9 752.1,365.2 752.8,364.9 753.6,364.6 754.3,364.1 755.1,364.0 755.8,363.8 756.6,363.4 757.3,363.2 757.6,363.0 758.1,363.0 758.8,362.7 759.6,362.6 760.3,362.3 761.1,362.1 761.8,362.0 762.6,361.9 763.3,361.8 763.9,361.9 764.1,361.8 764.8,362.0 765.6,362.2 766.3,362.3 767.1,362.9 767.8,363.2 768.6,363.6 769.3,363.9 770.1,364.3 770.2,364.3 770.8,364.7 771.6,364.8 772.3,365.2 773.1,365.4 773.8,365.7 774.6,366.0 775.3,366.1 776.1,366.5 776.8,366.8 777.6,366.8 777.8,367.0 778.3,367.1 779.1,367.3 779.8,367.5 780.6,367.7 781.3,367.9 782.1,368.2 782.8,368.3 783.6,368.6 784.3,368.7 785.1,368.9 785.8,368.9 786.6,369.3 787.3,369.4 787.9,369.3 788.1,369.4 788.8,369.6 789.6,369.9 790.3,370.1 791.1,370.1 791.8,370.3 792.6,370.5 793.3,370.5 794.1,370.8 794.8,370.9 795.6,371.1 796.3,371.2 797.1,371.3 797.8,371.4 798.6,371.7 799.3,371.8 800.1,371.9 800.5,372.1 800.8,372.0 801.6,372.1 802.3,372.3 803.1,372.4 803.8,372.6 804.6,372.8 805.3,372.9 806.1,373.1 806.8,373.2 807.6,373.2 808.3,373.4 809.1,373.4 809.8,373.6 810.6,373.5 811.3,373.7 812.1,373.7 812.8,373.8 813.1,373.9 813.6,373.9 814.3,373.7 815.1,373.5 815.8,373.4 816.6,373.2 817.3,372.9 818.1,372.6 818.8,372.3 819.6,372.0 820.3,371.9 821.1,371.4 821.8,371.1 822.6,371.0 823.2,370.7 823.3,370.6 824.1,370.4 824.8,370.2 825.6,369.9 826.3,369.7 827.1,369.3 827.8,369.0 828.6,368.9 829.3,368.5 830.1,368.4 830.8,368.1 830.8,368.1 831.6,367.9 832.3,367.8 833.1,367.2 833.8,367.3 834.6,367.0 835.3,367.0 835.8,367.0 836.1,366.9 836.8,367.0 837.6,367.3 838.3,367.6 839.1,367.9 839.8,368.4 840.6,368.9 841.3,369.3 842.1,370.0 842.8,370.4 843.4,370.5 843.6,370.8 844.3,371.4 845.1,371.9 845.8,372.4 846.6,372.8 847.3,373.5 848.1,374.1 848.8,374.6 849.6,375.0 850.3,375.4 850.9,375.8 851.1,375.8 851.8,376.2 852.6,376.6 853.3,377.0 854.1,377.2 854.8,377.5 855.6,377.6 856.3,378.1 857.1,378.2 857.8,378.3 858.5,378.1 858.6,378.2 859.3,378.3 860.1,378.4 860.8,378.2 861.6,378.2 862.3,378.1 863.1,378.0 863.8,377.7 864.6,377.6 865.3,377.5 866.1,377.4 866.8,377.3 867.6,377.2 868.3,377.0 868.6,377.0 869.1,376.9 869.8,377.0 870.6,376.7 871.3,376.8 872.1,376.6 872.8,376.3 873.6,376.3 874.3,376.2 875.1,375.9 875.8,375.9 876.2,375.8 876.6,375.7 877.3,375.4 878.1,375.2 878.8,375.0 879.6,374.7 880.3,374.4 881.1,374.2 881.8,373.8 882.6,373.7 883.3,373.2 883.8,373.3 884.1,373.1 884.8,372.9 885.6,372.6 886.3,372.2 887.1,372.1 887.8,371.6 888.6,371.4 889.3,371.2 890.1,371.0 890.8,370.8 891.3,370.6 891.6,370.7 892.3,370.4 893.1,370.5 893.8,370.4 894.6,370.5 895.3,370.3 896.1,370.2 896.8,370.2 897.6,370.1 897.6,370.2 898.3,370.3 899.1,370.4 899.8,370.8 900.6,371.1 901.3,371.6 902.1,372.2 902.8,372.7 903.4,373.2"/>
<polyline fill="none" stroke="#cccc4d" stroke-width="1.1" stroke-linejoin="round" stroke-opacity="0.92" points="455.6,287.8 455.9,269.7 456.3,284.9 456.4,284.5 456.7,272.3 457.1,284.0 457.5,273.9 457.9,277.1 458.3,282.2 458.6,280.3 459.0,275.1 459.4,270.9 459.7,268.8 460.1,272.6 460.6,276.7 460.9,273.8 461.4,266.4 461.6,268.3 462.1,279.7 462.4,282.4 463.0,286.2 463.1,286.4 463.9,281.7 464.4,279.2 464.6,279.9 465.4,286.2 465.7,287.0 466.1,287.2 466.9,286.3 467.3,286.4 467.6,287.8 468.4,296.0 468.4,296.1 469.1,292.2 469.5,290.4 469.9,291.3 470.6,295.0 471.1,296.3 471.4,295.9 472.1,289.3 472.4,288.8 472.9,295.7 473.2,299.9 473.6,295.7 474.3,284.4 474.4,284.7 475.1,286.1 475.9,286.9 475.9,287.3 476.6,286.2 477.0,286.0 477.4,285.9 478.1,288.7 478.9,292.0 479.2,293.8 479.6,294.9 480.4,297.3 480.8,298.3 481.1,300.0 481.9,303.5 482.4,306.0 482.6,306.7 483.4,308.4 483.5,309.0 484.1,311.4 484.9,313.7 485.6,316.6 486.4,318.7 486.6,319.5 487.1,320.1 487.9,321.4 488.6,322.5 489.4,323.4 490.1,324.0 490.9,325.2 491.6,325.3 491.7,325.4 492.4,325.9 493.1,327.0 493.9,327.2 494.6,327.6 495.4,328.0 496.1,328.8 496.9,328.8 497.6,329.0 498.0,329.6 498.4,329.2 499.1,329.7 499.9,329.9 500.6,330.0 501.4,330.2 502.1,330.7 502.9,330.4 503.6,330.3 504.4,330.2 505.1,330.7 505.6,330.6 505.9,330.8 506.6,330.6 507.4,330.5 508.1,330.3 508.9,330.3 509.6,330.3 510.4,330.0 511.1,330.0 511.9,330.2 512.6,329.7 513.1,329.1 513.4,329.8 514.1,329.3 514.9,328.7 515.6,328.8 516.4,328.2 517.1,327.7 517.9,327.3 518.6,326.7 519.4,326.5 520.1,326.3 520.7,325.6 520.9,325.7 521.6,325.5 522.4,324.0 523.1,323.7 523.9,322.8 524.6,321.9 525.4,321.2 525.8,321.1 526.1,320.9 526.9,320.0 527.6,319.5 528.4,319.0 529.1,318.4 529.5,318.3 529.9,318.1 530.6,317.8 531.4,317.9 532.1,317.5 532.1,317.4 532.9,317.6 533.6,317.4 534.4,317.9 534.6,318.3 535.1,318.5 535.9,319.4 536.6,319.7 537.1,319.7 537.4,320.8 538.1,321.1 538.9,321.1 539.6,322.2 540.4,322.3 541.1,322.4 541.9,323.3 542.2,323.5 542.6,324.4 543.4,324.4 544.1,325.3 544.9,326.0 545.6,326.6 546.4,327.2 547.1,328.1 547.2,328.5 547.9,328.9 548.6,329.1 549.4,329.7 550.1,330.7 550.9,331.1 551.6,331.7 552.4,332.0 553.1,333.4 553.5,333.5 553.9,333.2 554.6,334.2 555.4,334.8 556.1,334.4 556.9,335.3 557.6,335.8 558.4,336.5 559.1,336.7 559.9,337.1 560.6,337.5 561.1,338.2 561.4,338.4 562.1,338.1 562.9,338.4 563.6,339.6 564.4,339.0 565.1,339.4 565.9,339.8 566.6,340.2 567.4,340.6 568.1,340.7 568.7,340.6 568.9,341.0 569.6,341.2 570.4,341.9 571.1,341.7 571.9,341.6 572.6,341.9 573.4,342.7 574.1,342.4 574.9,342.2 575.6,342.7 576.2,342.8 576.4,343.1 577.1,342.6 577.9,342.9 578.6,342.9 579.4,342.4 580.1,342.5 580.9,342.8 581.6,342.7 582.4,342.3 582.5,342.1 583.1,342.2 583.9,341.6 584.6,341.2 585.4,340.6 586.1,340.3 586.9,339.7 587.6,339.9 588.4,338.6 588.8,338.6 589.1,338.4 589.9,337.5 590.6,337.2 591.4,335.7 592.1,335.5 592.9,335.0 593.6,333.4 593.9,333.4 594.4,333.6 595.1,332.5 595.9,331.5 596.6,330.9 597.4,330.1 598.1,329.5 598.9,328.4 598.9,328.1 599.6,327.0 600.4,325.6 601.1,324.4 601.9,322.7 602.6,321.5 602.7,321.1 603.4,320.1 604.1,319.4 604.6,319.1 604.9,318.5 605.6,315.9 606.4,314.3 606.4,314.7 607.1,316.2 607.9,319.2 608.1,320.2 608.6,321.9 609.4,324.3 610.1,326.7 610.1,326.8 610.9,328.6 611.6,330.2 612.4,331.6 613.1,333.2 613.9,334.7 614.6,335.7 615.2,336.8 615.4,337.1 616.1,337.6 616.9,338.3 617.6,339.8 618.4,340.3 619.1,341.1 619.9,341.1 620.2,342.1 620.6,342.1 621.4,342.3 622.1,342.6 622.9,343.0 623.6,343.3 624.4,343.5 625.1,343.6 625.9,344.4 626.6,344.3 627.4,344.6 627.8,344.7 628.1,344.2 628.9,345.2 629.6,345.2 630.4,345.4 631.1,345.6 631.9,345.6 632.6,346.2 633.4,346.0 634.1,346.2 634.9,346.4 635.4,346.8 635.6,347.0 636.4,346.9 637.1,346.9 637.9,347.7 638.6,347.4 639.4,348.3 640.1,348.2 640.9,348.3 641.6,348.6 642.4,349.1 642.9,349.5 643.1,349.3 643.9,349.9 644.6,350.5 645.4,350.3 646.1,350.4 646.9,350.9 647.6,351.2 648.0,351.6 648.4,351.8 649.1,352.2 649.9,353.3 650.6,353.1 651.4,354.0 652.1,355.4 652.9,355.7 653.0,355.7 653.6,356.0 654.4,356.8 655.1,356.9 655.9,357.2 656.6,357.3 657.4,358.0 658.1,358.2 658.9,358.5 659.6,358.8 660.4,359.3 660.6,359.3 661.1,359.7 661.9,359.4 662.6,359.9 663.4,360.6 664.1,360.4 664.9,360.8 665.6,361.0 666.4,361.2 667.1,361.2 667.9,360.7 668.2,361.1 668.6,361.1 669.4,360.9 670.1,361.2 670.9,361.1 671.6,361.0 672.4,361.5 673.1,361.5 673.9,361.4 674.6,361.4 675.4,361.5 676.1,361.6 676.9,361.7 677.6,361.8 678.3,361.8 678.4,362.0 679.1,362.1 679.9,362.1 680.6,361.9 681.4,362.0 682.1,362.3 682.9,362.2 683.6,362.3 684.4,361.7 685.1,361.7 685.9,362.6 686.6,362.6 687.4,362.9 688.1,362.8 688.4,362.7 688.9,362.7 689.6,362.4 690.4,363.0 691.1,362.7 691.9,363.0 692.6,363.0 693.4,363.0 694.1,363.2 694.9,362.9 695.6,363.0 696.4,362.9 697.1,363.0 697.9,363.6 698.5,363.0 698.6,363.4 699.4,363.3 700.1,363.2 700.9,363.0 701.6,362.4 702.4,362.6 703.1,362.7 703.9,362.0 704.6,362.0 705.4,361.7 706.0,362.0 706.1,361.6 706.9,362.3 707.6,361.8 708.4,361.6 709.1,362.5 709.9,362.3 710.6,362.3 711.4,362.4 712.1,362.3 712.9,362.5 713.6,362.8 713.6,362.9 714.4,363.0 715.1,363.2 715.9,363.4 716.6,363.9 717.4,364.7 718.1,365.3 718.9,365.4 719.6,365.8 720.4,366.8 721.1,367.1 721.2,367.1 721.9,367.0 722.6,367.7 723.4,368.1 724.1,368.8 724.9,368.8 725.6,370.0 726.4,370.2 727.1,370.5 727.9,370.3 728.6,370.7 728.8,371.0 729.4,370.3 730.1,370.7 730.9,370.7 731.6,370.2 732.4,370.5 733.1,370.0 733.9,370.3 734.6,369.9 735.4,369.7 736.1,370.0 736.3,369.7 736.9,369.7 737.6,368.9 738.4,368.9 739.1,369.1 739.9,368.9 740.6,368.5 741.4,368.6 742.1,368.0 742.9,368.3 743.6,367.9 743.9,368.3 744.4,368.1 745.1,368.0 745.9,368.2 746.6,368.6 747.4,367.9 748.1,368.0 748.9,368.5 749.6,368.1 750.0,368.6 750.4,368.2 751.1,368.1 751.9,368.1 752.6,368.2 753.4,367.7 754.1,367.4 754.9,367.0 755.6,366.2 756.4,366.0 757.1,366.3 757.6,365.9 757.9,365.7 758.6,365.3 759.4,364.5 760.1,364.2 760.9,363.3 761.6,362.9 762.4,362.0 763.1,361.4 763.9,360.8 764.6,359.8 765.1,359.5 765.4,359.2 766.1,358.4 766.9,357.7 767.6,356.0 768.4,354.9 769.1,354.4 769.9,353.3 770.6,352.4 771.4,350.9 771.5,350.7 772.1,349.1 772.9,347.9 773.6,346.3 774.4,344.3 775.1,342.9 775.2,342.9 775.9,342.0 776.6,340.1 777.3,340.4 777.4,340.5 778.1,341.1 778.9,342.5 779.6,344.2 780.3,345.2 780.4,345.7 781.1,346.9 781.9,348.1 782.6,349.8 783.4,351.5 784.1,352.1 784.9,353.2 785.3,353.9 785.6,355.1 786.4,355.5 787.1,356.5 787.9,357.2 788.6,357.9 789.4,358.3 790.1,359.3 790.4,359.4 790.9,359.0 791.6,359.5 792.4,359.8 793.1,360.1 793.9,360.4 794.6,360.7 795.4,360.9 796.1,360.9 796.7,361.0 796.9,360.3 797.6,360.2 798.4,360.0 799.1,358.8 799.9,357.6 800.6,355.9 801.4,354.5 801.7,354.5 802.1,353.6 802.9,351.1 803.6,348.4 804.4,345.5 805.0,344.3 805.1,344.3 805.9,342.9 806.6,341.2 807.4,340.4 807.5,340.2 808.1,341.4 808.9,343.8 809.6,346.1 810.1,348.1 810.4,349.0 811.1,351.9 811.9,354.5 812.6,357.8 813.1,359.5 813.4,359.6 814.1,361.5 814.9,362.4 815.6,365.0 816.4,366.0 817.1,367.0 817.9,367.8 818.1,368.0 818.6,368.6 819.4,369.3 820.1,369.9 820.9,370.6 821.6,371.2 822.4,372.0 823.1,371.7 823.9,372.5 824.6,372.7 825.4,372.8 825.7,372.6 826.1,373.5 826.9,373.3 827.6,373.6 828.4,374.1 829.1,373.9 829.9,374.3 830.6,374.4 831.4,374.8 832.1,375.0 832.9,374.6 833.6,375.2 834.4,375.0 835.1,375.2 835.8,375.2 835.9,375.4 836.6,375.1 837.4,375.5 838.1,375.9 838.9,375.6 839.6,376.3 840.4,375.7 841.1,376.0 841.9,375.9 842.6,375.9 843.4,375.9 844.1,376.1 844.9,376.2 845.6,376.1 845.9,376.5 846.4,376.6 847.1,375.8 847.9,376.3 848.6,376.0 849.4,375.9 850.1,376.2 850.9,375.6 851.6,375.2 852.4,374.8 853.1,374.0 853.9,374.4 854.6,373.7 855.4,373.6 856.0,373.3 856.1,373.4 856.9,373.3 857.6,372.5 858.4,371.9 859.1,370.9 859.9,370.4 860.6,369.7 861.4,368.4 862.1,368.6 862.9,367.3 863.6,366.6 863.6,367.3 864.4,366.9 865.1,365.6 865.9,365.0 866.6,365.3 867.4,364.1 868.1,363.1 868.9,363.2 869.6,363.7 869.9,363.3 870.4,363.4 871.1,363.8 871.9,364.2 872.6,364.6 873.4,365.0 874.1,366.3 874.9,366.7 875.6,367.7 876.2,368.6 876.4,368.4 877.1,368.9 877.9,369.5 878.6,370.3 879.4,370.9 880.1,370.9 880.9,371.8 881.6,372.7 882.4,372.9 883.1,372.8 883.8,373.1 883.9,372.7 884.6,373.2 885.4,374.0 886.1,373.7 886.9,373.6 887.6,373.7 888.4,374.0 889.1,374.1 889.9,374.1 890.6,374.1 891.3,374.7 891.4,374.9 892.1,374.6 892.9,374.8 893.6,375.6 894.4,375.3 895.1,375.9 895.9,376.3 896.6,376.9 897.4,377.2 898.1,377.6 898.9,378.3 898.9,378.0 899.6,378.3 900.4,378.8 901.1,380.1 901.9,380.2 902.6,381.4 903.4,382.1 903.4,382.3"/>
<polyline fill="none" stroke="#ffb3fa" stroke-width="1.05" stroke-linejoin="round" stroke-opacity="0.92" points="455.1,298.0 455.8,305.0 456.6,309.6 456.6,310.0 457.3,313.5 458.1,316.3 458.8,318.6 459.6,320.7 460.1,321.9 460.3,322.4 461.1,324.1 461.8,325.5 462.6,326.9 463.3,328.4 464.1,329.5 464.8,330.9 465.2,331.4 465.6,332.0 466.3,332.8 467.1,333.9 467.8,334.5 468.6,335.4 469.3,336.3 470.1,336.9 470.2,336.8 470.8,337.3 471.6,338.1 472.3,338.4 473.1,339.2 473.8,339.5 474.6,340.0 475.3,340.4 476.1,340.9 476.8,341.1 477.6,341.6 478.3,341.8 479.1,342.2 479.8,342.5 480.3,342.9 480.6,343.0 481.3,343.2 482.1,343.9 482.8,344.0 483.6,344.3 484.3,344.7 485.1,345.2 485.8,345.3 486.6,345.7 487.3,346.0 488.1,346.1 488.8,346.6 489.6,346.9 490.3,347.1 490.4,347.1 491.1,347.2 491.8,347.4 492.6,347.8 493.3,348.2 494.1,348.3 494.8,348.6 495.6,348.9 496.3,349.0 497.1,349.3 497.8,349.6 498.6,349.5 499.3,350.0 500.1,349.9 500.8,350.4 501.6,350.5 502.3,350.6 503.0,350.8 503.1,350.9 503.8,351.1 504.6,351.3 505.3,351.4 506.1,351.8 506.8,351.8 507.6,352.1 508.3,352.3 509.1,352.7 509.8,352.5 510.6,352.8 511.3,353.2 512.1,353.2 512.8,353.2 513.6,353.6 514.3,353.7 515.1,353.9 515.7,353.8 515.8,354.0 516.6,354.2 517.3,354.3 518.1,354.2 518.8,354.6 519.6,354.4 520.3,354.4 521.1,354.6 521.8,354.8 522.6,354.8 523.3,355.0 524.1,355.1 524.8,355.1 525.6,355.1 526.3,355.5 527.1,355.0 527.8,355.2 528.3,355.4 528.6,355.3 529.3,355.2 530.1,355.5 530.8,355.6 531.6,355.5 532.3,356.0 533.1,356.1 533.8,356.2 534.6,356.0 535.3,356.2 536.1,356.1 536.8,356.3 537.6,356.3 538.3,356.4 539.1,356.4 539.8,356.6 540.6,356.6 540.9,356.6 541.3,356.2 542.1,356.2 542.8,356.5 543.6,356.3 544.3,356.4 545.1,356.4 545.8,356.3 546.6,356.4 547.3,356.3 548.1,356.2 548.8,356.0 549.6,356.3 550.3,356.0 551.1,356.1 551.8,356.0 552.6,356.1 553.3,356.0 553.5,356.0 554.1,356.0 554.8,355.9 555.6,355.9 556.3,356.0 557.1,356.0 557.8,355.9 558.6,356.3 559.3,355.9 560.1,356.1 560.8,356.4 561.6,356.1 562.3,356.3 563.1,356.3 563.8,356.3 564.6,356.2 565.3,356.2 566.1,356.4 566.1,356.5 566.8,356.2 567.6,356.6 568.3,356.6 569.1,356.9 569.8,357.0 570.6,357.0 571.3,357.2 572.1,357.4 572.8,357.8 573.6,358.2 574.3,358.0 575.1,358.2 575.8,358.5 576.2,358.5 576.6,358.7 577.3,358.8 578.1,359.0 578.8,359.2 579.6,359.6 580.3,360.0 581.1,360.2 581.8,360.7 582.6,360.9 583.3,361.1 584.1,361.6 584.8,361.6 585.6,362.1 586.3,362.5 586.3,362.2 587.1,362.5 587.8,362.9 588.6,363.2 589.3,363.4 590.1,363.6 590.8,363.9 591.6,364.1 592.3,364.2 593.1,364.7 593.8,365.0 593.9,364.9 594.6,365.5 595.0,365.6 595.3,365.9 596.1,365.8 596.8,366.1 597.6,366.3 598.3,366.8 599.1,367.0 599.8,367.2 600.6,367.4 601.3,367.4 602.1,367.6 602.8,367.4 603.6,367.8 604.3,367.8 605.1,367.9 605.8,367.9 606.6,368.3 607.3,368.3 608.1,368.2 608.8,368.6 609.6,368.6 610.1,368.6 610.3,368.7 611.1,368.8 611.8,368.7 612.6,368.9 613.3,369.2 614.1,369.3 614.8,369.4 615.6,369.3 616.3,369.5 617.1,369.7 617.8,369.9 618.6,369.8 619.3,369.8 620.1,370.2 620.8,370.2 621.6,370.2 622.3,370.2 623.1,370.3 623.8,370.7 624.6,370.7 625.3,370.7 625.3,370.6 626.1,371.0 626.8,371.1 627.6,371.2 628.3,371.2 629.1,371.0 629.8,371.1 630.6,371.4 631.3,371.4 632.1,371.6 632.8,371.6 633.6,371.7 634.3,371.9 635.1,371.9 635.8,372.0 636.6,372.1 637.3,372.2 638.1,372.4 638.8,372.5 639.6,372.3 640.3,372.5 641.1,372.6 641.8,372.8 642.6,372.7 643.3,373.0 644.1,373.1 644.8,373.2 645.5,373.1 645.6,373.2 646.3,373.2 647.1,373.5 647.8,373.7 648.6,373.5 649.3,373.7 650.1,373.8 650.8,373.9 651.6,374.3 652.3,374.2 653.1,374.3 653.8,374.2 654.6,374.7 655.3,374.6 656.1,374.8 656.8,374.8 657.6,374.7 658.3,374.9 659.1,375.0 659.8,375.3 660.6,375.3 661.3,375.6 662.1,375.7 662.8,375.8 663.6,376.0 664.3,376.1 665.1,376.0 665.7,376.2 665.8,376.5 666.6,376.3 667.3,376.8 668.1,377.0 668.8,376.8 669.6,377.1 670.3,377.1 671.1,377.5 671.8,377.5 672.6,377.7 673.3,378.0 674.1,378.2 674.8,378.3 675.6,378.6 676.3,378.8 677.1,378.9 677.8,379.3 678.6,379.7 679.3,379.5 680.1,379.6 680.8,379.8 681.6,380.1 682.3,380.2 683.1,380.3 683.8,380.2 684.6,380.5 685.3,380.6 685.9,380.9 686.1,380.8 686.8,380.6 687.6,381.1 688.3,381.3 689.1,381.4 689.8,381.0 690.6,381.4 691.3,381.6 692.1,381.6 692.8,381.6 693.6,381.5 694.3,381.7 695.1,381.8 695.8,382.0 696.6,382.1 697.3,382.0 698.1,382.2 698.8,382.1 699.6,382.2 700.3,382.3 701.1,382.5 701.8,382.4 702.6,382.7 703.3,382.6 704.1,382.5 704.8,382.7 705.6,382.7 706.0,382.7 706.3,382.7 707.1,383.1 707.8,383.1 708.6,382.9 709.3,383.3 710.1,383.4 710.8,383.3 711.6,383.5 712.3,383.8 713.1,383.6 713.8,383.7 714.6,383.9 715.3,383.7 716.1,383.8 716.8,383.8 717.6,384.1 718.3,384.3 719.1,384.1 719.8,384.1 720.6,384.4 721.3,384.4 722.1,384.5 722.8,384.5 723.6,384.5 724.3,384.6 725.1,384.6 725.8,384.5 726.2,384.5 726.6,384.8 727.3,385.0 728.1,384.7 728.8,384.4 729.6,384.6 730.3,384.7 731.1,384.4 731.8,384.5 732.6,384.5 733.3,384.5 734.1,384.5 734.8,384.7 735.6,384.5 736.3,384.6 737.1,384.8 737.8,384.5 738.6,384.4 739.3,384.7 740.1,384.8 740.8,384.6 741.6,384.6 742.3,384.4 743.1,384.5 743.8,384.8 744.6,384.8 745.3,384.7 746.1,384.5 746.8,384.4 747.6,384.5 747.7,384.4 748.3,384.5 749.1,383.8 749.8,383.3 750.0,383.4 750.6,383.2 751.3,382.9 752.1,382.7 752.8,382.5 753.6,382.0 754.3,382.1 755.1,381.9 755.8,381.8 756.6,381.7 757.3,381.4 758.1,381.5 758.8,381.1 759.6,381.0 760.1,380.8 760.3,380.7 761.1,380.6 761.8,380.3 762.6,380.0 763.3,379.6 764.1,379.2 764.8,379.0 765.6,378.7 766.3,378.2 767.1,378.0 767.8,377.7 768.6,377.5 769.3,377.2 770.1,377.1 770.2,377.1 770.8,376.9 771.6,376.5 772.3,376.3 773.1,376.1 773.8,376.2 774.6,376.0 775.3,375.5 776.1,375.5 776.8,375.5 777.6,374.9 778.3,374.9 779.1,374.9 779.8,374.7 780.3,374.4 780.6,374.6 781.3,374.4 782.1,374.2 782.8,373.8 783.6,373.8 784.3,373.8 785.1,373.5 785.8,373.5 786.6,373.3 787.3,373.4 787.9,373.2 788.1,373.3 788.8,373.3 789.6,373.1 790.3,373.5 791.1,373.1 791.8,373.2 792.6,373.4 793.3,373.2 794.1,373.2 794.8,373.5 795.6,373.5 796.3,373.6 797.1,373.7 797.8,374.0 797.9,373.7 798.6,374.1 799.3,373.9 800.1,374.0 800.8,373.8 801.6,374.0 802.3,374.4 803.1,374.6 803.8,374.6 804.6,374.9 805.3,375.1 806.1,375.1 806.8,375.2 807.6,375.4 808.3,375.7 809.1,375.9 809.8,376.2 810.6,376.1 810.6,376.3 811.3,376.4 812.1,376.6 812.8,376.9 813.6,377.2 814.3,377.1 815.1,377.3 815.8,377.5 816.6,377.8 817.3,378.0 818.1,378.2 818.8,378.4 819.6,378.5 820.3,378.7 821.1,379.0 821.8,379.5 822.6,379.5 823.2,379.6 823.3,379.6 824.1,379.7 824.8,380.2 825.6,380.1 826.3,380.1 827.1,380.3 827.8,380.6 828.6,380.6 829.3,380.8 830.1,381.0 830.8,381.1 831.6,381.4 832.3,381.3 833.1,382.0 833.8,381.4 834.6,381.7 835.3,382.0 835.8,382.1 836.1,382.1 836.8,382.2 837.6,382.3 838.3,382.4 839.1,382.5 839.8,382.5 840.6,382.6 841.3,382.6 842.1,382.8 842.8,382.8 843.6,382.9 844.3,383.1 845.1,383.0 845.8,383.2 846.6,383.0 847.3,383.2 848.1,383.2 848.8,383.2 849.6,383.3 850.3,383.5 850.9,383.3 851.1,383.3 851.8,383.4 852.6,383.2 853.3,383.4 854.1,383.6 854.8,383.5 855.6,383.6 856.3,383.6 857.1,383.7 857.8,383.6 858.6,383.6 859.3,383.2 860.1,383.6 860.8,383.7 861.6,383.7 862.3,383.6 863.1,383.8 863.8,383.6 864.6,383.7 865.3,383.9 866.1,383.8 866.1,383.9 866.8,383.9 867.6,383.7 868.3,383.9 869.1,383.9 869.8,383.9 870.6,384.1 871.3,384.0 872.1,384.0 872.8,383.9 873.6,384.1 874.3,384.3 875.1,384.2 875.8,384.3 876.6,384.4 877.3,384.3 878.1,384.3 878.8,384.5 879.6,384.3 880.3,384.6 881.1,384.4 881.2,384.7 881.8,384.6 882.6,384.7 883.3,384.9 884.1,384.7 884.8,384.9 885.6,384.9 886.3,385.1 887.1,385.2 887.8,385.2 888.6,385.3 889.3,385.3 890.1,385.5 890.8,385.5 891.6,385.7 892.3,385.8 893.1,385.7 893.8,385.8 894.6,386.1 895.3,386.2 896.1,386.5 896.4,386.0 896.8,386.5 897.6,386.7 898.3,386.7 899.1,387.0 899.8,387.0 900.6,387.2 901.3,387.5 902.1,387.4 902.8,387.4 903.4,387.9"/>
<polyline fill="none" stroke="#ff8c00" stroke-width="1.05" stroke-linejoin="round" stroke-opacity="0.92" points="455.1,302.9 455.8,308.3 456.6,312.9 456.9,314.2 457.3,316.6 458.1,319.8 458.8,322.7 459.4,324.5 459.6,325.0 460.3,327.0 461.1,328.9 461.8,330.5 462.6,331.9 462.7,331.9 463.3,333.1 464.1,334.3 464.8,335.2 465.6,336.3 466.3,337.2 467.1,338.1 467.8,338.8 468.6,339.7 469.3,340.2 470.1,340.7 470.2,340.8 470.8,341.1 471.6,341.3 472.3,341.8 473.1,342.2 473.8,342.5 474.6,342.6 475.3,342.9 476.1,343.1 476.8,343.2 477.6,343.4 477.8,343.3 478.3,343.3 479.1,343.3 479.8,343.1 480.6,342.9 481.3,342.8 482.1,342.6 482.8,342.3 483.6,342.2 484.3,342.2 485.1,342.0 485.4,342.1 485.8,342.1 486.6,342.1 487.3,342.4 488.1,342.4 488.8,342.4 489.6,342.7 490.3,342.9 491.1,343.1 491.8,343.4 492.6,343.6 493.3,343.9 494.1,344.2 494.8,344.3 495.5,344.6 495.6,344.6 496.3,344.9 497.1,345.1 497.8,345.5 498.6,345.9 499.3,346.3 500.1,346.7 500.8,346.9 501.6,347.4 502.3,347.9 503.1,348.1 503.8,348.7 504.6,349.1 505.3,349.6 506.1,350.0 506.8,350.3 507.6,350.6 508.1,350.9 508.3,351.1 509.1,351.3 509.8,351.6 510.6,352.0 511.3,352.3 512.1,352.6 512.8,352.9 513.6,353.3 514.3,353.5 515.1,353.9 515.8,354.2 516.6,354.4 517.3,354.8 518.1,355.0 518.8,355.4 519.6,355.6 520.3,355.9 520.7,355.8 521.1,356.1 521.8,356.2 522.6,356.4 523.3,356.8 524.1,357.0 524.8,357.3 525.6,357.7 526.3,357.7 527.1,358.0 527.8,358.3 528.6,358.5 529.3,358.7 530.1,358.9 530.8,359.2 531.6,359.3 532.3,359.4 533.1,359.7 533.3,359.7 533.8,359.8 534.6,360.0 535.3,360.1 536.1,360.4 536.8,360.5 537.6,360.7 538.3,360.8 539.1,360.9 539.8,360.9 540.6,361.2 541.3,361.4 542.1,361.4 542.8,361.7 543.6,361.7 544.3,362.0 545.1,362.0 545.8,362.3 545.9,362.3 546.6,362.3 547.3,362.6 548.1,362.8 548.8,362.9 549.6,363.0 550.3,363.2 551.1,363.3 551.8,363.6 552.6,363.7 553.3,363.9 554.1,363.9 554.8,364.1 555.6,364.2 556.3,364.5 557.1,364.6 557.8,364.8 558.6,364.8 558.6,364.7 559.3,364.9 560.1,364.9 560.8,365.1 561.6,365.2 562.3,365.3 563.1,365.3 563.8,365.4 564.6,365.7 565.3,365.6 566.1,365.7 566.8,365.9 567.6,366.0 568.3,365.8 569.1,366.0 569.8,366.0 570.6,365.9 571.2,366.1 571.3,366.0 572.1,366.0 572.8,366.0 573.6,366.1 574.3,366.0 575.1,366.0 575.8,366.0 576.6,365.9 577.3,366.1 578.1,366.0 578.8,366.1 579.6,366.0 580.3,366.0 581.1,366.0 581.3,366.1 581.8,366.0 582.6,366.0 583.3,366.0 584.1,366.0 584.8,365.9 585.6,365.8 586.3,365.6 587.1,365.5 587.8,365.5 588.6,365.4 589.3,365.2 590.1,365.1 590.8,364.9 591.4,364.8 591.6,364.8 592.3,364.4 593.1,364.2 593.8,363.6 594.6,363.4 595.0,363.2 595.3,363.1 596.1,362.9 596.8,362.6 597.6,362.2 598.3,361.9 599.1,361.9 599.8,361.5 600.6,361.4 601.3,361.2 602.1,360.7 602.6,360.5 602.8,360.5 603.6,360.1 604.3,359.7 605.1,359.3 605.8,358.7 606.6,358.1 607.3,357.7 608.1,357.1 608.8,356.5 609.6,356.0 610.1,355.6 610.3,355.4 611.1,354.7 611.8,354.1 612.6,353.3 613.3,352.6 614.1,351.9 614.8,351.1 615.6,350.4 616.3,349.5 617.1,348.8 617.7,347.9 617.8,347.9 618.6,346.9 619.3,345.9 620.1,344.8 620.8,343.9 621.6,343.0 622.3,342.1 622.8,341.7 623.1,341.4 623.8,340.7 624.6,339.9 625.3,339.1 626.1,338.7 626.8,338.3 627.3,338.2 627.6,338.4 628.3,338.9 629.1,339.5 629.8,340.3 630.6,341.4 631.3,342.7 631.6,343.0 632.1,343.8 632.8,345.5 633.6,347.4 634.3,349.4 635.1,351.2 635.4,351.8 635.8,352.6 636.6,354.2 637.3,355.6 638.1,357.1 638.8,358.2 639.6,359.5 640.3,360.5 640.4,360.5 641.1,361.6 641.8,362.4 642.6,363.1 643.3,364.0 644.1,364.6 644.8,365.0 645.5,365.7 645.6,365.7 646.3,366.2 647.1,366.6 647.8,367.1 648.6,367.5 649.3,367.9 650.1,368.2 650.8,368.5 651.6,368.9 652.3,369.1 653.0,369.4 653.1,369.3 653.8,369.9 654.6,370.2 655.3,370.5 656.1,370.7 656.8,371.0 657.6,371.2 658.3,371.5 659.1,371.7 659.8,372.0 660.6,372.4 661.3,372.6 662.1,372.8 662.8,373.1 663.1,373.2 663.6,373.5 664.3,373.7 665.1,374.0 665.8,374.3 666.6,374.5 667.3,374.9 668.1,375.3 668.8,375.5 669.6,375.8 670.3,376.1 671.1,376.4 671.8,376.6 672.6,377.0 673.3,377.3 674.1,377.7 674.8,377.9 675.6,378.3 675.8,378.4 676.3,378.5 677.1,378.8 677.8,379.2 678.6,379.5 679.3,379.7 680.1,380.2 680.8,380.6 681.6,380.7 682.3,381.0 683.1,381.2 683.8,381.6 684.6,381.7 685.3,381.9 685.9,382.2 686.1,382.0 686.8,382.3 687.6,382.5 688.3,382.5 689.1,382.7 689.8,382.9 690.6,382.9 691.3,383.0 692.1,383.0 692.8,383.2 693.6,383.3 694.3,383.4 695.1,383.2 695.8,383.3 695.9,383.3 696.6,383.3 697.3,383.3 698.1,383.3 698.8,383.2 699.6,383.1 700.3,383.0 701.1,382.9 701.8,382.8 702.6,382.7 703.3,382.7 704.1,382.4 704.8,382.3 705.6,382.0 706.0,382.1 706.3,381.9 707.1,381.8 707.8,381.8 708.6,381.6 709.3,381.4 710.1,381.0 710.8,380.9 711.6,380.7 712.3,380.6 713.1,380.5 713.8,380.2 714.6,379.9 715.3,379.7 716.1,379.5 716.1,379.5 716.8,379.3 717.6,379.2 718.3,378.9 719.1,378.8 719.8,378.6 720.6,378.4 721.3,378.1 722.1,378.0 722.8,377.7 723.6,377.5 724.3,377.4 725.1,377.1 725.8,377.0 726.2,377.1 726.6,376.9 727.3,376.9 728.1,376.8 728.8,376.5 729.6,376.5 730.3,376.5 731.1,376.5 731.8,376.4 732.6,376.4 733.3,376.3 734.1,376.1 734.8,376.0 735.6,376.0 736.3,375.8 736.3,375.6 737.1,375.6 737.8,375.3 738.6,374.9 739.3,374.3 740.1,373.8 740.8,373.2 741.6,372.9 742.3,372.0 743.1,371.5 743.8,370.7 743.9,370.7 744.6,370.0 745.3,369.4 746.1,368.8 746.8,367.8 747.6,367.1 748.3,366.0 748.9,365.1 749.1,364.9 749.8,363.3 750.0,363.1 750.6,362.8 751.3,362.5 752.1,362.3 752.8,362.0 753.6,361.9 754.3,361.9 755.0,361.9 755.1,361.8 755.8,362.0 756.6,362.2 757.3,362.5 758.1,363.1 758.8,363.5 759.6,364.2 760.1,364.3 760.3,364.6 761.1,365.2 761.8,365.9 762.6,366.8 763.3,367.6 764.1,368.4 764.8,369.2 765.1,369.4 765.6,369.9 766.3,370.5 767.1,371.2 767.8,371.7 768.6,372.4 769.3,372.9 770.1,373.7 770.8,374.1 771.6,374.7 772.3,375.4 772.7,375.8 773.1,376.0 773.8,376.6 774.6,377.3 775.3,378.0 776.1,378.8 776.8,379.3 777.6,380.0 778.3,380.7 779.1,381.2 779.8,381.8 780.3,382.0 780.6,382.2 781.3,382.6 782.1,383.3 782.8,383.6 783.6,384.1 784.3,384.4 785.1,384.9 785.8,385.2 786.6,385.7 787.3,385.9 788.1,386.1 788.8,386.5 789.6,386.7 790.3,387.2 790.4,387.2 791.1,387.3 791.8,387.5 792.6,387.8 793.3,388.2 794.1,388.1 794.8,388.5 795.6,388.6 796.3,389.0 797.1,389.0 797.8,389.2 798.6,389.2 799.3,389.4 800.1,389.7 800.5,389.7 800.8,389.6 801.6,389.7 802.3,389.7 803.1,389.9 803.8,390.0 804.6,390.1 805.3,390.1 806.1,390.1 806.8,390.3 807.6,390.3 808.3,390.4 809.1,390.5 809.8,390.4 810.6,390.3 810.6,390.4 811.3,390.3 812.1,390.3 812.8,390.4 813.6,390.3 814.3,390.4 815.1,390.4 815.8,390.4 816.6,390.4 817.3,390.3 818.1,390.3 818.8,390.4 819.6,390.4 820.3,390.4 820.7,390.4 821.1,390.3 821.8,390.4 822.6,390.2 823.3,390.2 824.1,390.1 824.8,389.9 825.6,389.9 826.3,389.8 827.1,389.7 827.8,389.5 828.6,389.3 829.3,389.1 830.1,389.0 830.8,388.8 830.8,388.9 831.6,388.6 832.3,388.5 833.1,388.2 833.8,387.9 834.6,387.5 835.3,387.3 836.1,386.8 836.8,386.6 837.6,386.2 838.3,385.8 839.1,385.5 839.8,385.0 840.6,384.7 840.9,384.6 841.3,384.4 842.1,384.0 842.8,383.6 843.6,383.4 844.3,383.1 845.1,382.7 845.8,382.3 846.6,381.8 847.3,381.6 848.1,381.1 848.8,380.5 849.6,380.3 850.3,379.8 850.9,379.4 851.1,379.4 851.8,379.1 852.6,378.5 853.3,378.0 854.1,377.6 854.8,377.1 855.6,376.5 856.3,375.9 857.1,375.3 857.8,374.9 858.5,374.5 858.6,374.5 859.3,373.9 860.1,373.4 860.8,372.7 861.6,372.2 862.3,371.7 863.1,371.2 863.8,371.0 864.6,370.7 864.8,370.7 865.3,370.8 866.1,370.8 866.8,370.9 867.6,371.2 868.3,371.4 869.1,371.7 869.8,371.8 869.9,371.9 870.6,372.2 871.3,372.6 872.1,373.0 872.8,373.6 873.6,374.3 874.3,374.7 875.1,375.1 875.8,375.6 876.2,375.8 876.6,375.7 877.3,376.2 878.1,376.6 878.8,376.9 879.6,377.2 880.3,377.4 881.1,377.6 881.8,377.8 882.6,378.1 883.3,378.1 883.8,378.3 884.1,378.4 884.8,378.6 885.6,378.6 886.3,378.7 887.1,378.8 887.8,379.0 888.6,379.0 889.3,379.3 890.1,379.2 890.8,379.4 891.3,379.5 891.6,379.7 892.3,379.9 893.1,380.0 893.8,380.4 894.6,380.9 895.3,381.3 896.1,381.6 896.8,382.2 897.6,382.6 898.3,383.1 898.9,383.3 899.1,383.5 899.8,383.8 900.6,384.3 901.3,384.6 902.1,385.0 902.8,385.5 903.4,385.8"/>
<polyline fill="none" stroke="#2e8b57" stroke-width="1.05" stroke-linejoin="round" stroke-opacity="0.92" points="455.1,287.7 455.8,295.1 456.4,299.1 456.6,300.6 457.3,304.5 458.1,307.9 458.1,307.9 458.8,310.6 459.6,313.1 460.3,315.3 461.1,317.3 461.8,319.0 462.6,320.5 462.7,320.7 463.3,321.8 464.1,323.2 464.8,324.3 465.6,325.5 466.3,326.4 467.1,327.4 467.8,328.4 468.6,329.2 469.3,329.8 470.1,330.6 470.2,330.7 470.8,331.2 471.6,331.8 472.3,332.4 473.1,332.8 473.8,333.5 474.6,333.8 475.3,334.1 476.1,334.7 476.8,335.3 477.6,335.5 478.3,336.1 479.1,336.4 479.8,336.6 480.6,336.9 481.3,337.4 482.1,338.0 482.8,338.2 482.9,338.2 483.6,338.6 484.3,339.1 485.1,339.5 485.8,340.0 486.6,340.4 487.3,340.6 488.1,341.0 488.8,341.3 489.6,341.8 490.3,342.1 491.1,342.5 491.8,343.1 492.6,343.3 493.3,343.7 494.1,344.2 494.8,344.4 495.5,344.6 495.6,344.6 496.3,344.9 497.1,345.4 497.8,345.6 498.6,346.1 499.3,346.2 500.1,346.6 500.8,346.9 501.6,347.2 502.3,347.5 503.1,347.9 503.8,348.0 504.6,348.4 505.3,348.8 506.1,348.9 506.8,349.2 507.6,349.6 508.1,349.7 508.3,349.7 509.1,349.8 509.8,350.4 510.6,350.5 511.3,350.8 512.1,351.0 512.8,351.4 513.6,351.5 514.3,351.7 515.1,351.9 515.8,352.2 516.6,352.4 517.3,352.6 518.1,352.7 518.8,353.0 519.6,353.2 520.3,353.3 520.7,353.4 521.1,353.6 521.8,353.6 522.6,353.8 523.3,353.9 524.1,354.2 524.8,354.1 525.6,354.4 526.3,354.5 527.1,354.7 527.8,354.8 528.6,354.8 529.3,355.2 530.1,355.1 530.8,355.1 531.6,355.2 532.3,355.4 533.1,355.5 533.3,355.3 533.8,355.5 534.6,355.4 535.3,355.5 536.1,355.7 536.8,355.8 537.6,355.7 538.3,355.7 539.1,355.9 539.8,355.7 540.6,355.9 541.3,355.9 542.1,356.0 542.8,355.9 543.6,355.9 544.3,356.0 545.1,355.9 545.8,356.0 545.9,355.9 546.6,355.9 547.3,355.9 548.1,355.9 548.8,355.9 549.6,355.8 550.3,355.8 551.1,355.7 551.8,355.6 552.6,355.4 553.3,355.5 554.1,355.3 554.8,355.1 555.6,355.0 556.3,355.0 557.1,354.8 557.8,354.7 558.6,354.6 558.6,354.7 559.3,354.6 560.1,354.4 560.8,354.4 561.6,354.1 562.3,354.0 563.1,353.9 563.8,353.5 564.6,353.5 565.3,353.1 566.1,353.0 566.8,352.9 567.6,352.5 568.3,352.2 568.7,352.3 569.1,352.0 569.8,351.7 570.6,351.4 571.3,350.9 572.1,350.8 572.8,350.4 573.6,349.9 574.3,349.5 575.1,349.0 575.8,348.7 576.2,348.1 576.6,348.1 577.3,347.7 578.1,347.0 578.8,346.6 579.6,346.0 580.3,345.4 581.1,344.9 581.8,344.4 582.6,343.9 583.3,343.4 583.8,343.3 584.1,343.2 584.8,342.9 585.6,342.6 586.3,342.4 587.1,342.2 587.8,342.0 588.6,341.9 589.3,341.7 590.1,341.5 590.1,341.5 590.8,341.6 591.6,341.9 592.3,342.2 593.1,342.8 593.8,343.4 593.9,343.3 594.6,344.8 595.0,345.4 595.3,345.8 596.1,346.7 596.8,347.5 597.6,348.0 598.3,348.8 599.1,349.4 599.8,349.7 600.6,350.3 601.3,351.0 602.1,351.4 602.6,351.8 602.8,352.0 603.6,352.7 604.3,353.4 605.1,353.9 605.8,354.5 606.6,355.1 607.3,356.0 608.1,356.6 608.8,357.3 609.6,357.8 610.1,358.0 610.3,358.2 611.1,358.8 611.8,359.0 612.6,359.5 613.3,360.0 614.1,360.1 614.8,360.5 615.6,361.0 616.3,361.3 617.1,361.5 617.7,361.8 617.8,362.0 618.6,362.4 619.3,362.7 620.1,363.0 620.8,363.4 621.6,363.6 622.3,363.8 623.1,364.4 623.8,364.4 624.6,364.8 625.3,365.0 626.1,365.4 626.8,365.4 627.6,365.6 627.8,365.5 628.3,365.8 629.1,365.9 629.8,366.0 630.6,366.0 631.3,366.2 632.1,366.2 632.8,366.3 633.6,366.4 634.3,366.6 635.1,366.6 635.8,366.7 636.6,366.7 637.3,366.8 637.9,366.9 638.1,366.9 638.8,367.1 639.6,367.1 640.3,367.3 641.1,367.3 641.8,367.5 642.6,367.5 643.3,367.7 644.1,367.7 644.8,368.0 645.6,368.0 646.3,368.1 647.1,368.1 647.8,368.2 648.0,368.3 648.6,368.1 649.3,368.2 650.1,368.3 650.8,368.5 651.6,368.3 652.3,368.5 653.1,368.6 653.8,368.5 654.6,368.5 655.3,368.7 656.1,368.5 656.8,368.5 657.6,368.7 658.1,368.7 658.3,368.8 659.1,368.8 659.8,368.7 660.6,368.9 661.3,369.0 662.1,369.0 662.8,369.2 663.6,369.1 664.3,369.2 665.1,369.4 665.8,369.6 666.6,369.5 667.3,369.7 668.1,369.8 668.8,369.8 669.6,370.0 670.3,370.1 670.7,370.2 671.1,370.3 671.8,370.3 672.6,370.4 673.3,370.6 674.1,370.7 674.8,370.8 675.6,371.0 676.3,371.2 677.1,371.3 677.8,371.8 678.6,371.6 679.3,371.9 680.1,371.9 680.8,372.2 681.6,372.3 682.3,372.5 683.1,372.8 683.3,372.7 683.8,372.8 684.6,373.0 685.3,373.1 686.1,373.4 686.8,373.7 687.6,373.9 688.3,374.1 689.1,374.2 689.8,374.4 690.6,374.5 691.3,374.7 692.1,374.9 692.8,375.2 693.6,375.4 694.3,375.5 695.1,375.5 695.8,375.9 695.9,375.9 696.6,375.8 697.3,376.0 698.1,376.2 698.8,376.3 699.6,376.4 700.3,376.5 701.1,376.6 701.8,376.7 702.6,376.7 703.3,376.8 704.1,377.1 704.8,376.9 705.6,377.1 706.0,377.0 706.3,377.0 707.1,377.0 707.8,377.1 708.6,377.0 709.3,377.0 710.1,376.9 710.8,377.0 711.6,377.0 712.3,376.9 713.1,377.0 713.8,377.1 714.6,377.1 715.3,377.0 716.1,377.0 716.1,377.1 716.8,377.1 717.6,377.2 718.3,377.1 719.1,377.1 719.8,377.3 720.6,377.4 721.3,377.4 722.1,377.4 722.8,377.4 723.6,377.7 724.3,377.6 725.1,377.7 725.8,377.8 726.2,377.7 726.6,377.8 727.3,377.8 728.1,377.9 728.8,378.0 729.6,378.1 730.3,378.0 731.1,378.2 731.8,378.1 732.6,378.1 733.3,378.3 734.1,378.2 734.8,378.3 735.6,378.1 736.3,378.3 736.3,378.3 737.1,378.3 737.8,378.4 738.6,378.2 739.3,378.4 740.1,378.3 740.8,378.2 741.6,378.0 742.3,378.0 743.1,378.2 743.8,378.0 744.6,378.0 745.3,377.9 746.1,377.8 746.4,377.8 746.8,377.6 747.6,377.4 748.3,376.6 749.1,376.2 749.8,375.8 750.0,375.8 750.6,375.7 751.3,375.4 752.1,375.4 752.8,375.3 753.6,375.3 754.3,375.1 755.1,375.0 755.8,375.0 756.6,375.0 757.3,374.9 758.1,374.8 758.8,374.7 759.6,374.5 760.1,374.5 760.3,374.4 761.1,374.3 761.8,374.1 762.6,374.0 763.3,373.8 764.1,373.8 764.8,373.4 765.6,373.2 766.3,373.1 767.1,372.8 767.8,372.5 768.6,372.5 769.3,372.2 770.1,372.0 770.2,371.9 770.8,371.8 771.6,371.6 772.3,371.4 773.1,371.5 773.8,371.1 774.6,370.9 775.3,370.7 776.1,370.6 776.8,370.4 777.6,370.2 778.3,369.9 779.1,369.8 779.8,369.5 780.3,369.6 780.6,369.4 781.3,369.1 782.1,368.8 782.8,368.4 783.6,368.1 784.3,367.9 785.1,367.5 785.8,367.3 786.6,367.1 787.3,367.0 787.9,367.0 788.1,367.0 788.8,367.0 789.6,367.1 790.3,367.2 791.1,367.4 791.8,367.6 792.6,367.9 793.3,368.0 794.1,368.3 794.2,368.1 794.8,368.4 795.6,368.4 796.3,368.8 797.1,368.9 797.8,369.1 798.6,369.2 799.3,369.3 800.1,369.5 800.5,369.3 800.8,369.4 801.6,369.5 802.3,369.1 803.1,368.9 803.8,368.5 804.6,368.0 805.3,367.7 806.1,367.4 806.8,366.9 806.8,366.9 807.6,366.4 808.3,365.6 809.1,364.9 809.8,364.1 810.6,363.1 811.3,362.4 812.1,361.6 812.8,360.8 813.1,360.6 813.6,360.2 814.3,359.7 815.1,359.4 815.8,358.9 816.6,358.6 817.3,358.1 818.1,357.6 818.8,357.3 819.4,356.9 819.6,356.8 820.3,356.1 821.1,355.5 821.8,354.8 822.6,354.0 823.3,353.3 824.1,352.4 824.4,351.8 824.8,351.1 825.6,349.9 826.3,348.2 827.1,346.3 827.8,344.1 828.2,343.0 828.6,341.7 829.3,338.0 830.1,333.9 830.8,330.5 830.8,330.0 831.6,325.2 832.3,320.9 832.8,320.3 833.1,320.7 833.8,324.4 834.6,329.2 834.8,330.3 835.3,333.5 836.1,338.1 836.8,342.1 837.1,343.0 837.6,344.8 838.3,346.9 839.1,349.0 839.8,350.7 840.6,352.4 840.9,353.1 841.3,354.1 842.1,355.8 842.8,357.3 843.6,359.0 844.3,360.5 845.1,361.8 845.8,363.0 845.9,363.2 846.6,364.2 847.3,365.2 848.1,366.5 848.8,367.4 849.6,368.3 850.3,368.9 850.9,369.4 851.1,369.5 851.8,369.9 852.6,370.6 853.3,371.0 854.1,371.6 854.8,371.6 855.6,371.9 856.0,372.0 856.3,372.0 857.1,372.0 857.8,372.0 858.6,372.0 859.3,371.8 860.1,372.0 860.8,371.9 861.6,371.9 862.3,371.8 863.1,371.8 863.6,372.0 863.8,371.9 864.6,372.0 865.3,372.1 866.1,372.4 866.8,372.6 867.6,372.8 868.3,373.2 869.1,373.5 869.8,373.8 870.6,374.3 871.1,374.6 871.3,374.7 872.1,375.0 872.8,375.4 873.6,375.9 874.3,376.6 875.1,377.0 875.8,377.7 876.6,378.0 877.3,378.7 878.1,379.2 878.7,379.5 878.8,379.7 879.6,380.2 880.3,380.6 881.1,381.1 881.8,381.5 882.6,381.9 883.3,382.4 884.1,382.9 884.8,383.1 885.6,383.2 886.3,383.3 886.3,383.4 887.1,383.3 887.8,383.3 888.6,383.0 889.3,382.9 890.1,382.7 890.8,382.7 891.6,382.6 892.3,382.3 893.1,382.2 893.8,382.1 893.8,382.0 894.6,382.0 895.3,381.8 896.1,381.9 896.8,381.7 897.6,381.5 898.3,381.4 899.1,381.5 899.8,381.2 900.6,381.2 901.3,381.0 902.1,380.9 902.8,381.0 903.4,380.8"/>
<polyline fill="none" stroke="#0000ff" stroke-width="1.1" stroke-linejoin="round" stroke-opacity="0.92" points="455.1,292.8 455.8,303.9 456.1,306.7 456.6,311.3 457.3,316.7 457.6,318.1 458.1,320.0 458.8,322.4 459.6,324.3 460.1,325.6 460.3,326.1 461.1,327.8 461.8,329.3 462.6,330.7 462.7,330.7 463.3,331.8 464.1,332.9 464.8,334.1 465.6,335.1 466.3,336.2 467.1,337.1 467.8,338.1 468.6,338.9 469.3,339.9 470.1,340.6 470.2,340.8 470.8,341.5 471.6,342.2 472.3,343.1 473.1,343.7 473.8,344.6 474.6,345.2 475.3,345.9 476.1,346.6 476.8,347.3 477.6,348.0 478.3,348.6 479.1,349.3 479.8,349.9 480.6,350.5 481.3,351.0 482.1,351.6 482.8,352.1 482.9,352.1 483.6,352.6 484.3,353.2 485.1,353.7 485.8,354.3 486.6,354.6 487.3,355.1 488.1,355.6 488.8,356.1 489.6,356.5 490.3,356.9 491.1,357.3 491.8,357.7 492.6,358.2 493.3,358.5 494.1,359.0 494.8,359.4 495.5,359.7 495.6,359.8 496.3,360.1 497.1,360.7 497.8,361.0 498.6,361.4 499.3,361.8 500.1,362.2 500.8,362.6 501.6,363.0 502.3,363.3 503.1,363.7 503.8,364.0 504.6,364.4 505.3,364.7 506.1,365.1 506.8,365.5 507.6,365.8 508.1,366.0 508.3,366.2 509.1,366.5 509.8,366.8 510.6,367.2 511.3,367.5 512.1,367.8 512.8,368.2 513.6,368.4 514.3,368.8 515.1,369.1 515.8,369.4 516.6,369.7 517.3,370.0 518.1,370.3 518.8,370.5 519.6,370.8 520.3,371.0 520.7,371.0 521.1,371.3 521.8,371.4 522.6,371.7 523.3,371.8 524.1,372.1 524.8,372.2 525.6,372.5 526.3,372.6 527.1,372.9 527.8,373.0 528.6,373.1 529.3,373.3 530.1,373.5 530.8,373.6 531.6,373.9 532.3,374.0 533.1,374.0 533.3,374.2 533.8,374.1 534.6,374.4 535.3,374.4 536.1,374.6 536.8,374.8 537.6,374.9 538.3,375.0 539.1,375.2 539.8,375.3 540.6,375.4 541.3,375.6 542.1,375.6 542.8,375.8 543.6,375.9 544.3,376.0 545.1,376.1 545.8,376.1 545.9,376.1 546.6,376.2 547.3,376.3 548.1,376.3 548.8,376.4 549.6,376.4 550.3,376.5 551.1,376.5 551.8,376.7 552.6,376.7 553.3,376.7 554.1,376.7 554.8,376.8 555.6,376.9 556.3,376.9 557.1,376.9 557.8,376.9 558.6,376.9 558.6,376.8 559.3,376.9 560.1,376.9 560.8,376.9 561.6,376.9 562.3,376.9 563.1,376.9 563.8,376.8 564.6,376.8 565.3,376.8 566.1,376.7 566.8,376.8 567.6,376.8 568.3,376.8 569.1,376.7 569.8,376.7 570.6,376.7 571.2,376.7 571.3,376.6 572.1,376.6 572.8,376.6 573.6,376.5 574.3,376.5 575.1,376.4 575.8,376.5 576.6,376.4 577.3,376.3 578.1,376.3 578.8,376.3 579.6,376.2 580.3,376.1 581.1,376.1 581.8,376.2 582.6,376.1 583.3,376.1 583.8,376.2 584.1,376.1 584.8,376.2 585.6,376.1 586.3,376.2 587.1,376.2 587.8,376.3 588.6,376.4 589.3,376.4 590.1,376.5 590.8,376.5 591.6,376.6 592.3,376.6 593.1,376.6 593.8,376.7 593.9,376.6 594.6,376.0 595.0,375.7 595.3,375.8 596.1,375.8 596.8,375.8 597.6,375.8 598.3,375.8 599.1,375.9 599.8,375.9 600.6,376.0 601.3,376.1 602.1,376.0 602.8,376.2 603.6,376.1 604.3,376.2 605.1,376.3 605.8,376.3 606.6,376.4 607.3,376.4 608.1,376.4 608.8,376.5 609.6,376.6 610.3,376.6 611.1,376.7 611.8,376.6 612.6,376.7 613.3,376.8 614.1,376.8 614.8,377.0 615.2,377.0 615.6,377.0 616.3,377.2 617.1,377.5 617.8,377.8 618.6,378.1 619.3,378.3 620.1,378.7 620.8,379.0 621.6,379.2 622.3,379.4 622.8,379.5 623.1,379.6 623.8,379.8 624.6,379.9 625.3,379.9 626.1,380.0 626.8,380.2 627.6,380.3 628.3,380.3 629.1,380.3 629.8,380.4 630.6,380.5 631.3,380.5 632.1,380.7 632.8,380.7 632.9,380.9 633.6,380.9 634.3,381.0 635.1,381.1 635.8,381.2 636.6,381.4 637.3,381.5 638.1,381.6 638.8,381.7 639.6,381.8 640.3,381.9 641.1,382.0 641.8,382.1 642.6,382.2 643.3,382.3 644.1,382.5 644.8,382.5 645.5,382.5 645.6,382.7 646.3,382.7 647.1,382.8 647.8,382.8 648.6,382.9 649.3,383.1 650.1,383.1 650.8,383.3 651.6,383.3 652.3,383.4 653.1,383.6 653.8,383.6 654.6,383.6 655.3,383.7 656.1,383.8 656.8,383.8 657.6,383.8 658.1,383.8 658.3,383.7 659.1,383.8 659.8,383.8 660.6,383.9 661.3,383.8 662.1,383.7 662.8,383.7 663.6,383.7 664.3,383.6 665.1,383.5 665.8,383.5 666.6,383.5 667.3,383.4 668.1,383.3 668.2,383.4 668.8,383.3 669.6,383.2 670.3,382.9 671.1,382.8 671.8,382.6 672.6,382.3 673.3,382.2 674.1,382.0 674.8,381.8 675.6,381.5 676.3,381.3 677.1,381.1 677.8,380.9 678.3,380.9 678.6,380.8 679.3,380.6 680.1,380.4 680.8,380.3 681.6,380.0 682.3,379.9 683.1,379.7 683.8,379.5 684.6,379.5 685.3,379.3 686.1,379.1 686.8,379.0 687.6,378.9 688.3,378.8 688.4,378.7 689.1,378.7 689.8,378.6 690.6,378.5 691.3,378.4 692.1,378.4 692.8,378.3 693.6,378.3 694.3,378.2 695.1,378.1 695.8,378.0 696.6,378.0 697.3,377.9 698.1,377.9 698.5,377.7 698.8,377.7 699.6,377.6 700.3,377.5 701.1,377.3 701.8,377.1 702.6,377.0 703.3,377.0 703.5,377.0 704.1,377.0 704.8,377.1 705.6,377.2 706.3,377.3 707.1,377.5 707.8,377.5 708.6,377.8 709.3,377.9 710.1,378.0 710.8,378.3 711.1,378.3 711.6,378.4 712.3,378.5 713.1,378.7 713.8,378.8 714.6,379.0 715.3,379.2 716.1,379.4 716.8,379.6 717.6,379.8 718.3,380.0 719.1,380.2 719.8,380.4 720.6,380.7 721.2,380.8 721.3,380.9 722.1,381.1 722.8,381.4 723.6,381.7 724.3,382.0 725.1,382.2 725.8,382.4 726.6,382.8 727.3,383.1 728.1,383.4 728.8,383.7 729.6,383.9 730.3,384.2 731.1,384.5 731.3,384.6 731.8,384.8 732.6,385.1 733.3,385.5 734.1,385.7 734.8,386.0 735.6,386.3 736.3,386.6 737.1,386.8 737.8,387.2 738.6,387.4 739.3,387.7 740.1,388.0 740.8,388.2 741.4,388.5 741.6,388.5 742.3,388.6 743.1,388.8 743.8,388.9 744.6,389.1 745.3,389.3 746.1,389.4 746.8,389.7 747.6,389.8 748.3,390.1 748.9,390.4 749.1,390.5 749.8,391.3 750.0,391.4 750.6,391.5 751.3,391.8 752.1,392.0 752.8,392.1 753.6,392.2 754.3,392.2 755.1,392.4 755.8,392.4 756.6,392.5 757.3,392.6 758.1,392.6 758.8,392.8 759.6,392.8 760.1,392.9 760.3,392.9 761.1,393.1 761.8,393.1 762.6,393.4 763.3,393.5 764.1,393.6 764.8,393.8 765.6,393.9 766.3,394.1 767.1,394.1 767.8,394.2 768.6,394.5 769.3,394.6 770.1,394.6 770.2,394.8 770.8,394.7 771.6,395.0 772.3,395.1 773.1,395.2 773.8,395.3 774.6,395.4 775.3,395.6 776.1,395.6 776.8,395.8 777.6,395.8 778.3,395.8 779.1,395.9 779.8,395.9 780.3,395.9 780.6,396.0 781.3,395.9 782.1,396.0 782.8,395.9 783.6,396.0 784.3,395.9 785.1,396.0 785.8,396.0 786.6,396.0 787.3,395.9 788.1,395.9 788.8,396.0 789.6,396.0 790.3,395.9 790.4,395.9 791.1,396.0 791.8,395.9 792.6,395.9 793.3,395.7 794.1,395.7 794.8,395.5 795.6,395.5 796.3,395.3 797.1,395.1 797.8,395.0 798.6,394.9 799.3,394.9 800.1,394.7 800.5,394.7 800.8,394.6 801.6,394.7 802.3,394.5 803.1,394.5 803.8,394.3 804.6,394.2 805.3,394.1 806.1,394.1 806.8,394.0 807.6,393.9 808.3,393.8 809.1,393.9 809.8,393.8 810.6,393.7 811.3,393.7 812.1,393.5 812.8,393.5 813.1,393.4 813.6,393.4 814.3,393.3 815.1,393.2 815.8,393.2 816.6,393.1 817.3,393.0 818.1,393.0 818.8,392.8 819.6,392.7 820.3,392.8 821.1,392.7 821.8,392.6 822.6,392.5 823.3,392.4 824.1,392.4 824.8,392.2 825.6,392.2 825.7,392.2 826.3,392.0 827.1,392.1 827.8,391.9 828.6,391.8 829.3,391.6 830.1,391.5 830.8,391.4 831.6,391.3 832.3,391.2 833.1,391.0 833.8,391.0 834.6,390.9 835.3,390.9 835.8,390.9 836.1,390.9 836.8,390.9 837.6,391.0 838.3,391.1 839.1,391.2 839.8,391.4 840.6,391.5 841.3,391.7 842.1,391.7 842.8,391.9 843.6,392.0 844.3,392.1 845.1,392.2 845.8,392.2 845.9,392.1 846.6,392.1 847.3,392.2 848.1,392.2 848.8,392.2 849.6,392.2 850.3,392.2 851.1,392.2 851.8,392.2 852.6,392.1 853.3,392.2 853.5,392.1 854.1,392.1 854.8,392.0 855.6,391.8 856.3,391.5 857.1,391.2 857.8,390.8 858.6,390.4 859.3,390.2 860.1,389.8 860.8,389.6 861.0,389.6 861.6,389.5 862.3,389.5 863.1,389.3 863.8,389.2 864.6,389.1 865.3,389.1 866.1,389.0 866.8,388.9 867.6,388.9 868.3,388.9 868.6,388.9 869.1,388.9 869.8,388.9 870.6,389.0 871.3,389.1 872.1,389.3 872.8,389.3 873.6,389.4 874.3,389.5 875.1,389.6 875.8,389.6 876.2,389.7 876.6,389.6 877.3,389.6 878.1,389.4 878.8,389.2 879.6,389.0 880.3,388.7 881.1,388.3 881.8,388.0 882.6,387.6 883.3,387.3 883.8,387.0 884.1,386.9 884.8,386.5 885.6,386.0 886.3,385.4 887.1,384.9 887.8,384.2 888.6,383.6 889.3,383.1 890.1,382.6 890.8,382.2 891.3,382.1 891.6,382.0 892.3,381.8 893.1,381.5 893.8,381.4 894.6,381.1 895.3,381.0 896.1,381.0 896.8,380.8 897.6,380.8 897.6,380.8 898.3,380.8 899.1,380.9 899.8,381.0 900.6,381.2 901.3,381.3 902.1,381.6 902.8,381.8 903.4,382.0"/>
<polyline fill="none" stroke="#8b4513" stroke-width="1.05" stroke-linejoin="round" stroke-opacity="0.92" points="455.1,309.2 455.8,312.1 456.6,314.8 457.3,317.3 457.6,318.1 458.1,319.4 458.8,321.5 459.6,323.3 460.3,325.0 461.1,326.4 461.4,326.9 461.8,327.6 462.6,328.8 463.3,329.8 464.1,330.7 464.8,331.6 465.6,332.5 466.3,333.0 466.5,333.2 467.1,333.8 467.8,334.4 468.6,335.0 469.3,335.5 470.1,335.8 470.2,335.7 470.8,335.6 471.6,335.7 472.3,335.7 473.1,335.6 473.8,335.5 474.6,335.3 474.8,335.1 475.3,335.0 476.1,334.0 476.8,332.7 477.6,331.3 477.8,330.7 478.3,329.2 479.1,326.2 479.8,322.8 480.3,320.6 480.6,319.4 481.3,315.8 482.1,312.1 482.8,309.3 482.9,309.3 483.6,307.1 484.3,305.5 484.6,305.5 485.1,306.5 485.8,310.2 486.1,311.8 486.6,314.0 487.3,318.0 488.1,321.9 488.4,323.0 488.8,324.7 489.6,327.5 490.3,329.9 491.1,331.9 491.7,333.2 491.8,333.4 492.6,334.8 493.3,335.9 494.1,336.7 494.8,337.5 495.5,338.3 495.6,338.4 496.3,339.1 497.1,340.0 497.8,340.7 498.6,341.2 499.3,341.9 500.1,342.5 500.8,343.0 501.6,343.5 502.3,344.1 503.0,344.5 503.1,344.6 503.8,345.1 504.6,345.5 505.3,346.0 506.1,346.4 506.8,346.8 507.6,347.2 508.3,347.7 509.1,348.1 509.8,348.2 510.6,348.6 511.3,349.0 512.1,349.2 512.8,349.5 513.1,349.7 513.6,349.8 514.3,350.0 515.1,350.3 515.8,350.6 516.6,350.8 517.3,351.2 518.1,351.4 518.8,351.5 519.6,351.8 520.3,351.9 521.1,351.9 521.8,352.1 522.6,352.2 523.2,352.1 523.3,352.2 524.1,352.1 524.8,352.2 525.6,352.1 526.3,352.3 527.1,352.2 527.8,352.2 528.6,352.1 529.3,352.1 530.1,352.3 530.8,352.1 530.8,352.3 531.6,352.1 532.3,352.1 533.1,351.6 533.8,351.2 534.6,351.1 535.3,350.6 536.1,350.2 536.8,349.9 537.1,349.6 537.6,349.3 538.3,348.7 539.1,348.1 539.8,347.5 540.6,346.9 541.3,346.3 542.1,345.9 542.2,345.8 542.8,345.4 543.6,345.0 544.3,344.4 545.1,344.0 545.8,343.5 546.6,343.4 547.2,343.4 547.3,343.3 548.1,343.3 548.8,343.6 549.6,343.9 550.3,344.4 551.0,344.5 551.1,344.8 551.8,345.0 552.6,345.8 553.3,346.6 554.1,347.5 554.8,348.3 555.6,349.2 556.0,349.7 556.3,349.9 557.1,350.7 557.8,351.2 558.6,351.9 559.3,352.4 560.1,353.2 560.8,353.8 561.6,354.3 562.3,354.9 563.1,355.5 563.6,356.1 563.8,356.0 564.6,356.6 565.3,357.0 566.1,357.6 566.8,358.3 567.6,358.6 568.3,359.0 569.1,359.7 569.8,360.2 570.6,360.7 571.2,361.0 571.3,361.0 572.1,361.7 572.8,361.9 573.6,362.4 574.3,362.6 575.1,363.1 575.8,363.4 576.6,363.9 577.3,364.2 578.1,364.5 578.8,364.8 579.6,365.3 580.3,365.7 581.1,366.0 581.3,366.0 581.8,366.3 582.6,366.7 583.3,367.0 584.1,367.4 584.8,367.6 585.6,367.9 586.3,368.1 587.1,368.6 587.8,368.7 588.6,369.0 589.3,369.3 590.1,369.4 590.8,369.7 591.4,369.9 591.6,369.9 592.3,370.0 593.1,370.2 593.8,370.3 594.6,370.5 595.3,370.7 596.1,370.9 596.8,371.0 597.6,371.0 598.3,371.0 598.9,371.1 599.1,371.1 599.8,371.1 600.6,371.0 601.3,371.0 602.1,370.9 602.8,370.8 603.6,370.6 604.3,370.6 605.0,370.6 605.1,370.7 605.8,370.5 606.6,370.6 607.3,370.5 608.1,370.3 608.8,370.6 609.6,370.5 610.1,370.5 610.3,370.3 611.1,370.4 611.8,370.4 612.6,370.2 613.3,370.3 614.1,370.2 614.8,370.2 615.6,370.0 616.3,369.9 617.1,369.9 617.8,369.8 618.6,369.8 619.3,369.9 620.1,369.7 620.2,369.7 620.8,369.8 621.6,369.6 622.3,369.5 623.1,369.4 623.8,369.5 624.6,369.4 625.3,369.4 626.1,369.4 626.8,369.3 627.6,369.1 627.8,369.2 628.3,369.1 629.1,369.1 629.8,368.9 630.6,368.8 631.3,368.5 632.1,368.4 632.8,368.1 632.9,368.2 633.6,367.9 634.3,367.6 635.1,366.9 635.8,366.4 636.6,365.8 637.3,365.2 638.1,364.8 638.8,364.4 639.2,364.4 639.6,364.2 640.3,364.0 641.1,363.9 641.8,363.8 642.6,363.5 643.3,363.3 644.1,363.3 644.8,363.2 645.5,363.2 645.6,363.1 646.3,363.0 647.1,363.1 647.8,363.1 648.6,362.9 649.3,362.9 650.1,362.9 650.8,363.1 651.6,362.8 652.3,362.8 653.1,362.8 653.8,362.8 654.6,362.7 655.3,362.7 655.6,362.7 656.1,362.7 656.8,362.5 657.6,362.4 658.3,362.3 659.1,362.1 659.8,362.0 660.6,362.0 661.3,361.9 662.1,361.9 662.8,361.7 663.6,361.5 664.3,361.4 665.1,361.2 665.7,361.1 665.8,361.0 666.6,360.9 667.3,361.0 668.1,360.6 668.8,360.4 669.6,360.3 670.3,360.2 671.1,360.0 671.8,359.9 672.6,359.6 673.3,359.5 674.1,359.4 674.8,359.4 675.6,359.5 675.8,359.3 676.3,359.4 677.1,359.4 677.8,359.5 678.6,359.4 679.3,359.5 680.1,359.8 680.8,359.8 681.6,359.7 682.3,360.0 683.1,360.0 683.3,360.1 683.8,360.2 684.6,360.2 685.3,360.6 686.1,360.6 686.8,361.0 687.6,361.1 688.3,361.3 689.1,361.5 689.8,361.8 690.6,361.8 691.3,362.0 692.1,362.2 692.8,362.6 693.4,362.7 693.6,362.7 694.3,362.9 695.1,362.9 695.8,363.4 696.6,363.4 697.3,363.6 698.1,363.8 698.8,364.0 699.6,364.1 700.3,364.3 701.0,364.4 701.1,364.4 701.8,364.5 702.6,364.7 703.3,364.8 704.1,364.9 704.8,365.1 705.6,365.0 706.3,365.1 707.1,365.2 707.8,365.5 708.6,365.4 709.3,365.4 710.1,365.7 710.8,365.7 711.1,365.6 711.6,365.6 712.3,365.8 713.1,365.8 713.8,365.8 714.6,365.9 715.3,366.0 716.1,366.1 716.8,366.0 717.6,366.2 718.3,366.1 719.1,366.0 719.8,366.0 720.6,366.1 721.2,366.2 721.3,366.2 722.1,365.9 722.8,366.0 723.6,365.9 724.3,365.8 725.1,365.5 725.8,365.4 726.6,365.3 727.3,364.9 728.1,364.6 728.8,364.5 728.8,364.4 729.6,364.0 730.3,363.5 731.1,363.2 731.8,362.6 732.6,362.2 733.3,361.6 734.1,361.0 734.8,360.6 735.6,359.8 736.3,359.4 736.3,359.3 737.1,358.7 737.8,358.3 738.6,357.8 739.3,357.2 740.1,356.5 740.8,356.0 741.6,355.4 742.3,355.1 743.1,354.8 743.8,354.3 743.9,354.3 744.6,354.0 745.3,353.8 746.1,353.5 746.8,353.4 747.6,353.1 748.3,353.2 748.9,353.1 749.1,353.2 749.8,353.6 750.0,353.5 750.6,353.6 751.3,353.2 752.1,352.4 752.8,351.8 753.6,350.9 754.3,350.0 755.0,349.4 755.1,349.1 755.8,348.4 756.6,347.1 757.3,346.1 758.1,344.6 758.8,343.0 759.6,341.6 760.1,340.5 760.3,339.7 761.1,337.6 761.8,334.8 762.6,332.3 763.3,329.6 763.9,327.9 764.1,327.1 764.8,324.6 765.6,321.9 766.3,320.0 767.1,319.0 767.2,319.0 767.8,319.9 768.6,322.9 769.3,326.4 769.7,327.9 770.1,329.5 770.8,333.2 771.6,337.0 772.3,340.4 772.7,341.5 773.1,343.0 773.8,345.5 774.6,347.6 775.3,349.4 776.1,351.1 776.5,351.8 776.8,352.2 777.6,353.4 778.3,354.2 779.1,355.0 779.8,355.5 780.3,355.7 780.6,355.6 781.3,355.5 782.1,355.2 782.8,354.8 783.6,354.5 784.1,354.4 784.3,354.0 785.1,353.2 785.8,352.4 786.6,351.0 787.3,349.9 787.9,349.4 788.1,348.9 788.8,347.9 789.6,346.7 790.3,345.9 791.1,345.5 791.1,345.5 791.8,346.2 792.6,347.5 793.3,349.7 794.1,351.6 794.2,351.8 794.8,353.6 795.6,355.7 796.3,357.9 797.1,360.1 797.8,361.6 797.9,361.7 798.6,362.8 799.3,364.3 800.1,365.5 800.8,366.8 801.6,367.4 802.3,367.9 803.0,368.2 803.1,368.3 803.8,368.3 804.6,368.1 805.3,368.0 806.1,367.9 806.8,367.9 807.6,367.6 808.3,367.4 809.1,367.3 809.8,367.1 810.6,366.9 810.6,367.1 811.3,366.7 812.1,366.1 812.8,365.5 813.6,364.9 814.3,364.4 815.1,363.8 815.8,363.3 816.6,363.1 816.9,363.1 817.3,363.1 818.1,363.3 818.8,363.4 819.6,363.7 820.3,363.9 821.1,364.0 821.8,364.2 822.6,364.4 823.2,364.4 823.3,364.4 824.1,364.4 824.8,364.3 825.6,364.1 826.3,363.9 827.1,363.8 827.8,363.6 828.6,363.5 829.3,363.3 830.1,363.1 830.8,363.0 830.8,363.2 831.6,363.3 832.3,363.6 833.1,363.9 833.8,364.4 834.6,364.8 835.3,365.2 836.1,365.6 836.8,365.7 837.1,365.7 837.6,365.6 838.3,365.7 839.1,365.1 839.8,364.9 840.6,364.2 841.3,363.7 842.1,363.2 842.8,362.4 843.4,362.0 843.6,361.6 844.3,360.3 845.1,358.2 845.8,355.9 846.6,353.6 847.2,351.8 847.3,351.1 848.1,348.1 848.8,344.8 849.6,343.5 849.7,343.4 850.3,344.1 851.1,346.5 851.8,349.2 852.2,350.5 852.6,352.0 853.3,355.8 854.1,359.5 854.7,361.8 854.8,362.1 855.6,364.3 856.3,366.2 857.1,367.6 857.8,369.0 858.5,369.4 858.6,369.5 859.3,369.7 860.1,370.0 860.8,370.4 861.6,370.5 862.3,370.5 863.1,370.7 863.6,370.8 863.8,370.7 864.6,370.5 865.3,369.9 866.1,369.5 866.8,368.9 867.6,368.5 868.3,368.3 868.6,368.2 869.1,368.2 869.8,368.4 870.6,368.5 871.3,368.9 872.1,369.4 872.4,369.5 872.8,369.8 873.6,370.9 874.3,372.3 875.1,373.9 875.8,375.2 876.2,375.8 876.6,376.4 877.3,377.7 878.1,378.9 878.8,380.0 879.6,380.9 880.3,381.6 881.1,382.1 881.2,382.1 881.8,382.0 882.6,381.8 883.3,381.3 884.1,380.8 884.8,380.2 885.6,379.6 886.3,379.1 887.1,378.5 887.5,378.2 887.8,378.1 888.6,377.7 889.3,377.4 890.1,376.9 890.8,376.5 891.6,376.3 892.3,376.0 893.1,375.8 893.8,375.8 893.8,375.7 894.6,375.8 895.3,376.0 896.1,376.0 896.8,376.2 897.6,376.5 898.3,376.9 898.9,376.9 899.1,377.1 899.8,377.3 900.6,377.7 901.3,378.2 902.1,378.6 902.8,379.3 903.4,379.5"/>
<polyline fill="none" stroke="#808000" stroke-width="1.05" stroke-linejoin="round" stroke-opacity="0.92" points="455.1,295.4 455.8,301.3 456.6,306.5 457.1,309.2 457.3,310.4 458.1,313.7 458.8,316.7 459.6,319.1 460.1,320.7 460.3,321.0 461.1,322.9 461.8,324.3 462.6,325.8 463.3,327.0 464.1,328.0 464.8,329.1 465.2,329.5 465.6,329.9 466.3,330.7 467.1,331.5 467.8,332.0 468.6,332.6 469.3,333.2 470.1,333.6 470.2,333.6 470.8,334.0 471.6,334.5 472.3,334.8 473.1,335.2 473.8,335.6 474.6,336.0 475.3,336.1 476.1,336.2 476.5,336.3 476.8,336.3 477.6,336.2 478.3,336.3 479.1,336.3 479.8,336.2 480.6,336.2 481.3,336.3 482.1,336.3 482.8,336.3 482.9,336.2 483.6,336.2 484.3,336.0 485.1,335.8 485.8,335.6 486.6,335.3 487.3,334.9 488.1,334.6 488.8,334.2 489.6,333.8 490.3,333.3 490.4,333.3 491.1,332.7 491.8,332.3 492.6,331.7 493.3,330.8 494.1,330.3 494.8,329.4 495.6,328.7 496.3,327.8 497.1,327.1 497.8,326.3 498.0,326.1 498.6,325.6 499.3,324.8 500.1,324.1 500.8,323.3 501.6,322.6 502.3,321.8 503.1,320.9 503.8,320.2 504.6,319.3 505.3,318.5 505.6,318.0 506.1,317.5 506.8,316.5 507.6,315.4 508.3,314.2 509.1,313.2 509.8,312.0 510.6,311.0 511.3,310.0 511.9,309.1 512.1,309.0 512.8,308.2 513.6,307.7 514.3,307.0 515.1,305.8 515.2,305.3 515.8,300.9 516.6,293.5 516.7,293.0 517.3,286.6 517.9,283.5 518.1,283.7 518.8,286.9 519.2,289.1 519.6,292.1 520.3,299.8 520.7,303.0 521.1,305.7 521.8,310.8 522.6,315.1 523.2,318.1 523.3,318.6 524.1,321.1 524.8,323.2 525.6,325.3 526.3,326.9 527.0,328.3 527.1,328.3 527.8,329.7 528.6,330.9 529.3,332.3 530.1,333.5 530.8,334.3 531.6,335.2 532.1,335.8 532.3,336.0 533.1,336.8 533.8,337.5 534.6,338.2 535.3,338.9 536.1,339.4 536.8,340.0 537.6,340.3 538.3,340.8 538.4,340.6 539.1,341.1 539.8,341.6 540.6,341.8 541.3,342.2 542.1,342.5 542.8,342.9 543.6,343.1 544.3,343.3 544.7,343.3 545.1,343.4 545.8,343.6 546.6,343.8 547.3,344.0 548.1,344.2 548.8,344.4 549.6,344.5 550.3,344.5 551.0,344.4 551.1,344.6 551.8,344.6 552.6,344.7 553.3,344.6 554.1,344.5 554.8,344.5 555.6,344.7 556.3,344.6 557.1,344.7 557.8,344.7 558.6,344.5 558.6,344.6 559.3,344.6 560.1,344.6 560.8,344.5 561.6,344.4 562.3,344.3 563.1,344.1 563.8,344.1 564.6,343.9 565.3,343.9 566.1,343.8 566.1,343.9 566.8,343.8 567.6,343.8 568.3,343.7 569.1,343.6 569.8,343.6 570.6,343.5 571.3,343.5 572.1,343.5 572.8,343.4 573.6,343.4 573.7,343.2 574.3,343.3 575.1,343.1 575.8,343.0 576.6,343.0 577.3,342.8 578.1,342.8 578.8,342.6 579.6,342.4 580.3,342.2 581.1,342.2 581.3,342.1 581.8,341.8 582.6,341.6 583.3,341.2 584.1,341.1 584.8,340.4 585.6,340.1 586.3,339.6 586.3,339.4 587.1,338.9 587.8,338.2 588.6,337.2 589.3,336.2 590.1,335.2 590.8,334.0 591.4,333.3 591.6,332.9 592.3,331.6 593.1,330.1 593.8,328.8 594.6,327.5 595.2,326.8 595.3,326.8 596.1,326.2 596.8,325.5 597.6,325.0 598.2,325.0 598.3,324.9 599.1,325.2 599.8,325.9 600.6,326.5 601.3,327.6 601.5,327.6 602.1,328.4 602.8,329.4 603.6,330.5 604.3,331.7 605.1,332.9 605.8,333.9 606.6,334.8 607.3,335.8 608.1,336.5 608.8,337.3 609.6,338.3 610.3,339.2 611.1,339.9 611.8,340.8 612.6,341.7 612.7,341.6 613.3,342.3 614.1,343.2 614.8,344.0 615.6,344.8 616.3,345.7 617.1,346.5 617.8,347.1 618.6,347.9 619.3,348.6 620.1,349.2 620.2,349.3 620.8,349.7 621.6,350.4 622.3,351.1 623.1,351.5 623.8,351.9 624.6,352.6 625.3,353.1 626.1,353.5 626.8,353.8 627.6,354.3 627.8,354.2 628.3,354.6 629.1,354.9 629.8,355.1 630.6,355.5 631.3,355.8 632.1,355.9 632.8,356.3 633.6,356.4 634.3,356.5 635.1,356.7 635.4,356.8 635.8,357.0 636.6,357.1 637.3,357.2 638.1,357.3 638.8,357.4 639.6,357.6 640.3,357.6 641.1,357.7 641.8,357.8 642.6,357.8 643.3,357.9 644.1,358.1 644.8,358.1 645.5,358.1 645.6,358.1 646.3,358.1 647.1,358.2 647.8,358.2 648.6,358.3 649.3,358.2 650.1,358.4 650.8,358.3 651.6,358.3 652.3,358.4 653.1,358.4 653.8,358.5 654.6,358.5 655.3,358.6 655.6,358.9 656.1,358.5 656.8,358.7 657.6,358.7 658.3,358.8 659.1,358.8 659.8,358.9 660.6,359.1 661.3,359.1 662.1,359.3 662.8,359.2 663.6,359.3 664.3,359.5 665.1,359.3 665.7,359.3 665.8,359.3 666.6,359.3 667.3,359.3 668.1,359.2 668.8,359.0 669.6,358.9 670.3,359.0 671.1,358.7 671.8,358.3 672.6,358.4 673.3,358.2 674.1,358.2 674.8,358.1 675.6,358.2 675.8,358.2 676.3,358.2 677.1,358.1 677.8,358.1 678.6,358.2 679.3,358.3 680.1,358.3 680.8,358.3 681.6,358.5 682.3,358.5 683.1,358.6 683.3,358.5 683.8,358.6 684.6,358.7 685.3,358.8 686.1,359.2 686.8,359.4 687.6,359.6 688.3,360.0 689.1,360.2 689.8,360.5 690.6,360.6 691.3,361.1 692.1,361.4 692.8,361.8 693.4,362.0 693.6,362.0 694.3,362.1 695.1,362.4 695.8,362.9 696.6,363.2 697.3,363.6 698.1,363.8 698.8,364.1 699.6,364.3 700.3,364.8 701.1,365.0 701.8,365.3 702.6,365.5 703.3,365.6 703.5,365.7 704.1,365.8 704.8,365.9 705.6,366.0 706.3,366.1 707.1,366.1 707.8,366.4 708.6,366.3 709.3,366.5 710.1,366.5 710.8,366.5 711.6,366.6 712.3,366.8 713.1,366.9 713.6,367.0 713.8,366.9 714.6,367.0 715.3,367.2 716.1,367.4 716.8,367.2 717.6,367.5 718.3,367.6 719.1,367.8 719.8,367.8 720.6,368.1 721.2,368.3 721.3,368.3 722.1,368.6 722.8,369.0 723.6,369.5 724.3,370.1 725.1,370.4 725.8,370.6 726.2,370.7 726.6,370.7 727.3,370.7 728.1,370.6 728.8,370.4 729.6,370.4 730.3,370.2 731.1,370.1 731.8,369.9 732.6,369.7 733.3,369.5 733.8,369.4 734.1,369.5 734.8,369.3 735.6,369.0 736.3,368.9 737.1,368.7 737.8,368.6 738.6,368.4 739.3,368.2 740.1,368.3 740.8,368.2 741.4,368.1 741.6,368.2 742.3,368.4 743.1,368.1 743.8,368.4 744.6,368.3 745.3,368.4 746.1,368.5 746.8,368.5 747.6,368.8 747.7,368.7 748.3,368.8 749.1,369.2 749.8,369.3 750.0,369.4 750.6,369.5 751.3,369.2 752.1,369.1 752.8,369.0 753.6,368.8 754.3,368.5 755.1,368.0 755.8,367.7 756.6,367.4 757.3,367.0 757.6,366.9 758.1,366.8 758.8,366.4 759.6,365.9 760.3,365.4 761.1,365.0 761.8,364.3 762.6,363.9 763.3,363.3 764.1,362.9 764.8,362.2 765.1,361.9 765.6,361.5 766.3,360.6 767.1,360.1 767.8,359.3 768.6,358.2 769.3,357.4 770.1,356.4 770.8,355.1 771.5,354.4 771.6,354.2 772.3,352.8 773.1,351.2 773.8,349.6 774.6,347.7 775.3,345.9 776.1,344.1 776.5,342.9 776.8,342.0 777.6,339.2 778.3,336.3 779.1,334.1 779.8,332.8 779.8,332.8 780.6,332.1 781.3,331.8 782.1,331.5 782.1,331.6 782.8,332.6 783.6,334.5 784.3,336.3 784.8,336.7 785.1,336.6 785.8,336.0 786.6,335.3 787.3,334.2 787.4,334.1 788.1,331.5 788.8,327.0 789.6,322.9 790.3,320.9 790.4,321.0 791.1,322.9 791.8,327.0 792.4,330.4 792.6,331.5 793.3,336.0 794.1,340.8 794.8,345.1 794.9,345.5 795.6,348.8 796.3,352.1 797.1,355.2 797.8,357.7 797.9,358.2 798.6,360.0 799.3,362.3 800.1,364.3 800.8,366.0 801.6,366.9 801.7,367.0 802.3,367.2 803.1,367.3 803.8,367.6 804.6,367.7 805.3,367.8 806.1,368.1 806.8,368.2 806.8,368.2 807.6,368.4 808.3,368.4 809.1,368.6 809.8,368.7 810.6,368.9 811.3,369.1 812.1,369.2 812.8,369.5 813.1,369.3 813.6,369.6 814.3,369.9 815.1,370.2 815.8,370.6 816.6,371.1 817.3,371.6 818.1,372.0 818.8,372.4 819.6,372.7 820.3,373.2 820.7,373.2 821.1,373.4 821.8,373.8 822.6,374.0 823.3,374.4 824.1,374.7 824.8,375.1 825.6,375.3 826.3,375.5 827.1,375.7 827.8,375.6 828.2,375.7 828.6,375.8 829.3,375.6 830.1,375.5 830.8,375.3 831.6,375.2 832.3,375.0 833.1,374.8 833.8,374.7 834.6,374.7 835.3,374.5 835.8,374.6 836.1,374.5 836.8,374.5 837.6,374.7 838.3,374.8 839.1,375.1 839.8,375.1 840.6,375.5 841.3,375.6 842.1,375.5 842.8,375.8 843.4,375.9 843.6,375.7 844.3,375.8 845.1,375.6 845.8,375.7 846.6,375.5 847.3,375.6 848.1,375.4 848.8,375.3 849.6,375.4 850.3,375.5 850.9,375.2 851.1,375.3 851.8,375.0 852.6,374.6 853.3,374.2 854.1,373.8 854.8,373.0 855.6,372.5 856.3,371.9 857.1,371.3 857.8,371.1 858.5,370.9 858.6,370.6 859.3,370.6 860.1,370.3 860.8,370.0 861.6,370.0 862.3,369.7 863.1,369.6 863.8,369.6 864.6,369.5 864.8,369.5 865.3,369.4 866.1,369.5 866.8,369.9 867.6,370.0 868.3,370.4 869.1,370.7 869.8,371.2 870.6,371.6 871.1,372.1 871.3,372.0 872.1,372.7 872.8,373.6 873.6,374.7 874.3,375.6 875.1,376.8 875.8,377.8 876.6,378.8 877.3,379.5 877.4,379.5 878.1,380.1 878.8,380.7 879.6,381.3 880.3,381.9 881.1,382.3 881.8,382.8 882.6,383.2 883.3,383.5 883.8,383.3 884.1,383.3 884.8,383.3 885.6,382.9 886.3,382.6 887.1,382.4 887.8,382.1 888.6,382.0 889.3,381.5 890.1,381.3 890.8,380.9 891.3,380.6 891.6,380.6 892.3,380.6 893.1,380.4 893.8,380.1 894.6,380.2 895.3,379.8 896.1,379.9 896.8,379.8 897.6,379.5 898.3,379.5 898.9,379.6 899.1,379.5 899.8,379.7 900.6,379.7 901.3,380.0 902.1,380.2 902.8,380.5 903.4,380.7"/>
<polyline fill="none" stroke="#da70d6" stroke-width="1.05" stroke-linejoin="round" stroke-opacity="0.92" points="455.1,300.4 455.8,306.9 456.6,311.8 456.6,311.9 457.3,315.3 458.1,317.7 458.8,320.1 459.6,322.1 460.1,323.6 460.3,324.3 461.1,325.9 461.8,327.6 462.6,328.8 463.3,330.4 464.1,331.5 464.8,333.0 465.2,333.3 465.6,333.9 466.3,334.6 467.1,335.6 467.8,336.3 468.6,336.9 469.3,337.5 470.1,338.2 470.2,338.2 470.8,338.6 471.6,339.2 472.3,339.6 473.1,340.2 473.8,340.4 474.6,341.1 475.3,341.3 476.1,341.7 476.8,342.0 477.6,342.5 478.3,342.8 479.1,343.3 479.8,343.5 480.3,343.8 480.6,344.2 481.3,344.4 482.1,344.6 482.8,345.2 483.6,345.4 484.3,345.9 485.1,346.2 485.8,346.4 486.6,346.6 487.3,347.1 488.1,347.5 488.8,347.7 489.6,348.1 490.3,348.5 490.4,348.3 491.1,348.8 491.8,349.1 492.6,349.3 493.3,349.5 494.1,349.7 494.8,350.1 495.6,350.1 496.3,350.3 497.1,350.6 497.8,350.6 498.6,350.7 499.3,351.0 500.1,351.4 500.8,351.6 501.6,351.6 502.3,351.7 503.0,352.1 503.1,352.2 503.8,352.4 504.6,352.7 505.3,353.0 506.1,353.1 506.8,353.4 507.6,353.4 508.3,353.6 509.1,354.0 509.8,354.3 510.6,354.5 511.3,354.7 512.1,354.9 512.8,355.1 513.6,354.9 514.3,355.2 515.1,355.4 515.7,355.5 515.8,355.3 516.6,355.7 517.3,355.6 518.1,355.7 518.8,355.9 519.6,356.0 520.3,355.8 521.1,356.2 521.8,356.1 522.6,356.1 523.3,356.2 524.1,356.0 524.8,356.3 525.6,356.4 526.3,356.3 527.1,356.4 527.8,356.4 528.3,356.5 528.6,356.6 529.3,356.4 530.1,356.4 530.8,356.5 531.6,356.7 532.3,356.3 533.1,356.4 533.8,356.1 534.6,356.5 535.3,356.3 536.1,356.4 536.8,356.2 537.6,356.0 538.3,356.2 539.1,356.1 539.8,355.9 540.6,355.8 540.9,356.0 541.3,355.9 542.1,356.2 542.8,355.7 543.6,355.6 544.3,355.6 545.1,355.3 545.8,355.3 546.6,355.5 547.3,355.2 548.1,355.0 548.8,354.9 549.6,355.0 550.3,354.9 551.1,354.8 551.8,354.7 552.6,354.7 553.3,354.7 553.5,354.6 554.1,354.8 554.8,354.4 555.6,354.6 556.3,354.7 557.1,354.8 557.8,354.7 558.6,354.9 559.3,355.0 560.1,355.0 560.8,355.0 561.6,355.2 562.3,355.2 563.1,355.0 563.8,355.2 564.6,355.5 565.3,355.2 566.1,355.4 566.1,355.4 566.8,355.4 567.6,355.5 568.3,355.7 569.1,355.8 569.8,355.9 570.6,355.9 571.3,356.1 572.1,356.4 572.8,356.6 573.6,356.7 574.3,356.9 575.1,357.1 575.8,357.2 576.2,357.1 576.6,357.3 577.3,357.4 578.1,357.4 578.8,357.8 579.6,358.5 580.3,358.4 581.1,358.6 581.8,359.1 582.6,359.6 583.3,359.8 584.1,360.1 584.8,360.4 585.6,360.7 586.3,361.2 586.3,361.1 587.1,361.3 587.8,361.7 588.6,362.0 589.3,362.2 590.1,362.6 590.8,362.9 591.6,363.1 592.3,363.6 593.1,363.7 593.8,363.9 593.9,363.8 594.6,364.1 595.0,364.6 595.3,364.4 596.1,364.8 596.8,364.9 597.6,365.2 598.3,365.4 599.1,365.4 599.8,365.7 600.6,365.9 601.3,366.1 602.1,366.3 602.8,366.4 603.6,366.7 604.3,366.9 605.1,367.0 605.8,367.0 606.6,367.3 607.3,367.4 608.1,367.6 608.8,367.9 609.6,367.8 610.3,367.9 611.1,367.9 611.8,368.1 612.6,368.2 613.3,368.6 614.1,368.6 614.8,368.6 615.2,368.9 615.6,368.6 616.3,369.0 617.1,369.1 617.8,369.1 618.6,369.1 619.3,369.2 620.1,369.3 620.8,369.5 621.6,369.2 622.3,369.5 623.1,369.7 623.8,369.7 624.6,369.6 625.3,369.9 625.3,369.9 626.1,370.2 626.8,370.3 627.6,370.3 628.3,370.2 629.1,370.5 629.8,370.5 630.6,370.8 631.3,371.1 632.1,371.0 632.8,371.4 633.6,371.4 634.3,371.4 635.1,371.3 635.4,371.5 635.8,371.4 636.6,371.8 637.3,371.8 638.1,372.0 638.8,372.0 639.6,371.8 640.3,372.2 641.1,372.3 641.8,372.5 642.6,372.3 643.3,372.4 644.1,372.6 644.8,372.5 645.5,372.6 645.6,372.6 646.3,373.2 647.1,372.9 647.8,372.9 648.6,373.1 649.3,373.2 650.1,373.5 650.8,373.6 651.6,373.6 652.3,373.7 653.1,373.8 653.8,373.8 654.6,373.8 655.3,374.3 656.1,374.1 656.8,374.4 657.6,374.4 658.1,374.5 658.3,374.5 659.1,374.5 659.8,374.8 660.6,375.0 661.3,375.2 662.1,375.3 662.8,375.5 663.6,375.6 664.3,375.7 665.1,375.6 665.8,375.9 666.6,376.4 667.3,376.3 668.1,376.6 668.8,376.6 669.6,376.7 670.3,377.2 670.7,377.1 671.1,377.3 671.8,377.3 672.6,377.4 673.3,377.3 674.1,377.8 674.8,377.7 675.6,377.8 676.3,378.4 677.1,378.5 677.8,378.7 678.6,378.7 679.3,378.9 680.1,379.1 680.8,379.2 681.6,379.3 682.3,379.5 683.1,379.2 683.3,379.7 683.8,379.5 684.6,379.8 685.3,379.9 686.1,379.8 686.8,380.1 687.6,380.1 688.3,380.0 689.1,380.1 689.8,380.3 690.6,380.0 691.3,380.3 692.1,380.5 692.8,380.5 693.6,380.4 694.3,380.6 695.1,380.9 695.8,381.0 695.9,380.8 696.6,380.8 697.3,380.9 698.1,381.0 698.8,381.0 699.6,381.1 700.3,381.3 701.1,381.4 701.8,381.1 702.6,381.6 703.3,381.6 704.1,381.8 704.8,381.7 705.6,381.8 706.3,382.0 707.1,381.5 707.8,382.2 708.6,382.1 708.6,381.8 709.3,381.8 710.1,382.3 710.8,382.2 711.6,382.5 712.3,382.5 713.1,382.5 713.8,382.8 714.6,382.8 715.3,382.9 716.1,383.0 716.8,383.0 717.6,383.1 718.3,383.2 719.1,383.0 719.8,383.2 720.6,383.3 721.2,383.3 721.3,383.1 722.1,383.3 722.8,383.5 723.6,383.5 724.3,383.7 725.1,383.5 725.8,383.5 726.6,383.6 727.3,383.6 728.1,383.6 728.8,383.5 729.6,383.8 730.3,383.9 731.1,383.9 731.8,383.7 732.6,383.8 733.3,384.1 733.8,383.8 734.1,383.9 734.8,383.8 735.6,384.0 736.3,384.0 737.1,384.1 737.8,383.9 738.6,383.9 739.3,383.7 740.1,383.8 740.8,383.7 741.6,383.8 742.3,383.7 743.1,384.0 743.8,383.7 744.6,383.9 745.3,383.7 746.1,383.9 746.8,384.0 747.6,383.7 747.7,383.9 748.3,383.8 749.1,383.9 749.8,383.9 750.0,383.8 750.6,383.8 751.3,383.7 752.1,383.7 752.8,383.6 753.6,383.8 754.3,383.5 755.1,383.6 755.8,383.5 756.6,383.2 757.3,383.3 758.1,383.0 758.8,383.1 759.6,383.1 760.1,382.7 760.3,382.7 761.1,382.6 761.8,382.8 762.6,382.4 763.3,382.1 764.1,382.2 764.8,382.0 765.6,381.8 766.3,381.5 767.1,381.2 767.8,381.2 768.6,381.0 769.3,380.8 770.1,380.7 770.2,380.7 770.8,380.8 771.6,380.6 772.3,380.3 773.1,380.0 773.8,379.7 774.6,379.7 775.3,379.5 776.1,379.4 776.8,379.0 777.6,378.8 778.3,378.7 779.1,378.4 779.8,378.3 780.3,378.4 780.6,378.1 781.3,378.1 782.1,378.1 782.8,377.9 783.6,377.8 784.3,377.5 785.1,377.5 785.8,377.3 786.6,377.3 787.3,377.2 788.1,377.1 788.8,377.3 789.6,377.1 790.3,377.0 790.4,376.9 791.1,377.0 791.8,377.0 792.6,377.3 793.3,377.2 794.1,377.1 794.8,377.1 795.6,377.2 796.3,377.3 797.1,377.6 797.8,377.6 798.6,377.6 799.3,377.7 800.1,377.5 800.5,377.9 800.8,377.8 801.6,378.1 802.3,378.0 803.1,378.0 803.8,378.2 804.6,378.2 805.3,378.5 806.1,378.5 806.8,378.6 807.6,378.7 808.3,378.7 809.1,379.0 809.8,379.0 810.6,379.4 811.3,379.3 812.1,379.4 812.8,379.5 813.1,379.5 813.6,379.6 814.3,379.9 815.1,379.9 815.8,380.2 816.6,380.2 817.3,380.3 818.1,380.3 818.8,380.8 819.6,381.1 820.3,381.0 821.1,381.4 821.8,381.4 822.6,381.4 823.3,381.7 824.1,381.7 824.8,381.9 825.6,382.2 825.7,382.1 826.3,382.0 827.1,382.5 827.8,382.3 828.6,382.5 829.3,382.6 830.1,382.8 830.8,382.8 831.6,382.8 832.3,383.4 833.1,383.1 833.8,383.2 834.6,383.1 835.3,383.5 836.1,383.8 836.8,383.9 837.6,384.1 838.3,384.0 838.3,383.9 839.1,383.9 839.8,384.1 840.6,384.0 841.3,384.1 842.1,384.0 842.8,384.2 843.6,384.5 844.3,384.2 845.1,384.3 845.8,384.0 846.6,384.5 847.3,384.5 848.1,384.6 848.8,384.5 849.6,384.4 850.3,384.4 850.9,384.7 851.1,384.6 851.8,384.5 852.6,384.7 853.3,384.7 854.1,384.9 854.8,384.8 855.6,384.7 856.3,384.9 857.1,384.9 857.8,385.2 858.6,385.0 859.3,384.9 860.1,385.1 860.8,385.1 861.6,385.2 862.3,385.3 863.1,385.2 863.6,385.3 863.8,385.3 864.6,385.3 865.3,385.4 866.1,385.5 866.8,385.4 867.6,385.5 868.3,385.6 869.1,385.7 869.8,385.8 870.6,385.7 871.3,385.9 872.1,386.0 872.8,386.2 873.6,386.0 874.3,386.0 875.1,386.0 875.8,386.4 876.2,386.5 876.6,386.3 877.3,386.6 878.1,386.7 878.8,386.9 879.6,386.8 880.3,387.1 881.1,387.2 881.8,387.2 882.6,387.6 883.3,387.7 884.1,387.8 884.8,388.1 885.6,388.5 886.3,388.2 886.3,388.5 887.1,388.7 887.8,388.7 888.6,388.9 889.3,389.0 890.1,389.4 890.8,389.3 891.6,389.6 892.3,389.6 893.1,390.0 893.8,390.2 894.6,390.2 895.3,390.5 896.1,390.9 896.4,390.8 896.8,390.9 897.6,391.0 898.3,391.6 899.1,392.0 899.8,392.0 900.6,392.4 901.3,392.6 902.1,392.9 902.8,393.2 903.4,393.4"/>
<g stroke="#4a4a4a" stroke-width="0.7" fill="none">
<path d="M451.6 262.6H455.5V466.2H904.3V469.4"/>
<path d="M451.6 466.2H455.5"/>
<path d="M451.6 447.9H455.5"/>
<path d="M451.6 429.5H455.5"/>
<path d="M451.6 411.2H455.5"/>
<path d="M451.6 392.9H455.5"/>
<path d="M451.6 374.5H455.5"/>
<path d="M451.6 356.2H455.5"/>
<path d="M451.6 337.9H455.5"/>
<path d="M451.6 319.5H455.5"/>
<path d="M451.6 301.2H455.5"/>
<path d="M451.6 282.9H455.5"/>
<path d="M451.6 264.5H455.5"/>
<path d="M518.4 466.2V469.4"/>
<path d="M582.7 466.2V469.4"/>
<path d="M646.9 466.2V469.4"/>
<path d="M711.1 466.2V469.4"/>
<path d="M775.3 466.2V469.4"/>
<path d="M839.6 466.2V469.4"/>
<path d="M455.5 466.2V469.4"/>
</g>
<g font-size="5.4" fill="#333">
<text x="449.2" y="468.1" text-anchor="end">0</text>
<text x="449.2" y="449.8" text-anchor="end">10</text>
<text x="449.2" y="431.4" text-anchor="end">20</text>
<text x="449.2" y="413.1" text-anchor="end">30</text>
<text x="449.2" y="394.8" text-anchor="end">40</text>
<text x="449.2" y="376.4" text-anchor="end">50</text>
<text x="449.2" y="358.1" text-anchor="end">60</text>
<text x="449.2" y="339.8" text-anchor="end">70</text>
<text x="449.2" y="321.4" text-anchor="end">80</text>
<text x="449.2" y="303.1" text-anchor="end">90</text>
<text x="449.2" y="284.8" text-anchor="end">100</text>
<text x="449.2" y="267.1" text-anchor="end">110</text>
<text x="518.2" y="475.2" text-anchor="middle">50</text>
<text x="582.5" y="475.2" text-anchor="middle">100</text>
<text x="646.7" y="475.2" text-anchor="middle">150</text>
<text x="710.9" y="475.2" text-anchor="middle">200</text>
<text x="775.1" y="475.2" text-anchor="middle">250</text>
<text x="839.4" y="475.2" text-anchor="middle">300</text>
<text x="903.6" y="475.2" text-anchor="middle">350</text>
</g>
<text x="461.2" y="267.8" font-size="8" fill="#333">dB</text>
<text x="897" y="459" font-size="8" fill="#333">MHz</text>
<g font-size="8.3" fill="#333">
<text x="455" y="496">Limits:</text><text x="455" y="514.3">Main:</text><text x="455" y="532.8">Remote:</text></g>
<rect x="503.7" y="489.8" width="6.5" height="6.4" fill="#ff2a2a"/>
<text x="516.7" y="495.7" font-size="7.45" fill="#222">Tested</text>
<rect x="503.7" y="508.2" width="6.5" height="6.4" fill="#ff8c00"/>
<text x="516.7" y="514.1" font-size="7.45" fill="#222">1,2-3,6</text>
<rect x="503.7" y="526.8" width="6.5" height="6.4" fill="#ffc84d"/>
<text x="516.7" y="532.7" font-size="7.45" fill="#222">1,2-3,6</text>
<rect x="565.4" y="508.2" width="6.5" height="6.4" fill="#2e8b57"/>
<text x="578.4" y="514.1" font-size="7.45" fill="#222">1,2-4,5</text>
<rect x="565.4" y="526.8" width="6.5" height="6.4" fill="#7fd8a0"/>
<text x="578.4" y="532.7" font-size="7.45" fill="#222">1,2-4,5</text>
<rect x="627.1" y="508.2" width="6.5" height="6.4" fill="#0000ff"/>
<text x="640.1" y="514.1" font-size="7.45" fill="#222">1,2-7,8</text>
<rect x="627.1" y="526.8" width="6.5" height="6.4" fill="#4d4dff"/>
<text x="640.1" y="532.7" font-size="7.45" fill="#222">1,2-7,8</text>
<rect x="688.8" y="508.2" width="6.5" height="6.4" fill="#8b4513"/>
<text x="701.8" y="514.1" font-size="7.45" fill="#222">3,6-4,5</text>
<rect x="688.8" y="526.8" width="6.5" height="6.4" fill="#cd8f5a"/>
<text x="701.8" y="532.7" font-size="7.45" fill="#222">3,6-4,5</text>
<rect x="750.5" y="508.2" width="6.5" height="6.4" fill="#808000"/>
<text x="763.5" y="514.1" font-size="7.45" fill="#222">3,6-7,8</text>
<rect x="750.5" y="526.8" width="6.5" height="6.4" fill="#cccc4d"/>
<text x="763.5" y="532.7" font-size="7.45" fill="#222">3,6-7,8</text>
<rect x="812.2" y="508.2" width="6.5" height="6.4" fill="#da70d6"/>
<text x="825.2" y="514.1" font-size="7.45" fill="#222">4,5-7,8</text>
<rect x="812.2" y="526.8" width="6.5" height="6.4" fill="#ffb3fa"/>
<text x="825.2" y="532.7" font-size="7.45" fill="#222">4,5-7,8</text>
</svg>

<!-- right scrollbar -->
<div class="sb" style="left:1017.5px;top:93px;width:6.5px;height:462px"></div>
<div class="th" style="left:1018.5px;top:130px;width:5.5px;height:390px"></div>
<div class="abs" style="left:1020px;top:97.5px;width:0;height:0;border-left:2px solid transparent;border-right:2px solid transparent;border-bottom:2.5px solid #707070"></div>
<div class="abs" style="left:1020px;top:540.5px;width:0;height:0;border-left:2px solid transparent;border-right:2px solid transparent;border-top:2.5px solid #606060"></div>
<!-- bottom scrollbar -->
<div class="sb" style="left:284.5px;top:547px;width:733px;height:8px"></div>
<div class="th" style="left:295.5px;top:548px;width:680px;height:7px"></div>
<div class="abs" style="left:288px;top:549.5px;width:0;height:0;border-top:2px solid transparent;border-bottom:2px solid transparent;border-right:2.5px solid #a0a0a0"></div>
<div class="abs" style="left:1011.5px;top:549.5px;width:0;height:0;border-top:2px solid transparent;border-bottom:2px solid transparent;border-left:2.5px solid #505050"></div>
<!-- feedback -->
<div class="abs" style="left:942px;top:537px;width:68px;height:18px;background:#34495f;border-radius:2px 2px 0 0"></div>
<svg class="abs" style="left:950px;top:540.5px" width="13" height="13" viewBox="0 0 13 13">
  <circle cx="6.3" cy="6.3" r="5.2" fill="none" stroke="#fff" stroke-width="0.9"/>
  <path d="M2.9 6.7 A3.6 3.6 0 0 0 9.7 6.7 A9 9 0 0 1 2.9 6.7Z" fill="#fff" transform="rotate(-14 6.3 6.3)"/>
</svg>
<div class="abs" style="left:968.5px;top:540.5px;line-height:12px;font-size:7.2px;color:#fff">Feedback</div>
</body>
</html>
